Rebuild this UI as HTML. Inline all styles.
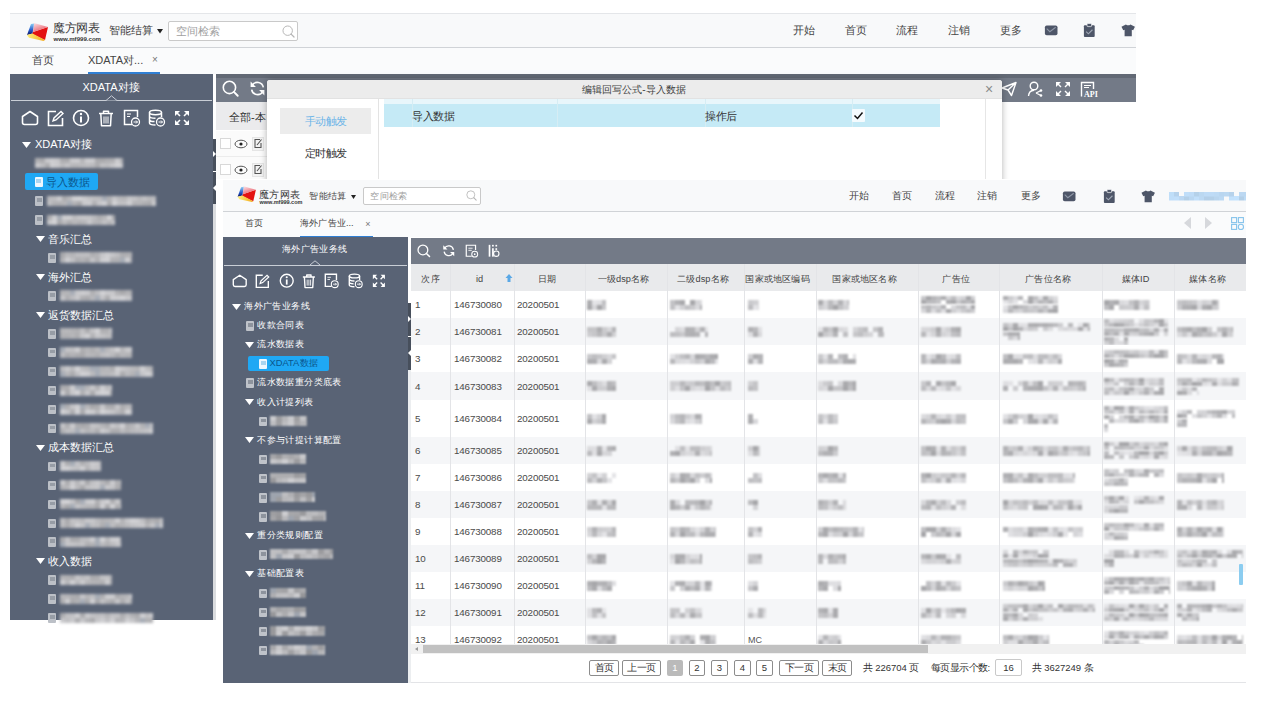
<!DOCTYPE html>
<html><head><meta charset="utf-8"><style>
html,body{margin:0;padding:0;width:1280px;height:720px;overflow:hidden;background:#fff;position:relative}
body{font-family:"Liberation Sans",sans-serif}
.a{position:absolute}
.t{white-space:nowrap}
b{display:inline-block;width:1em;text-align:center;font-weight:inherit}
svg{overflow:visible}
</style></head><body>
<div class="a" style="left:10px;top:13px;width:1126px;height:35px;background:#f8f9fa;border-top:1px solid #e4e6e9;border-bottom:1px solid #d0d3d7;box-sizing:border-box"></div>
<svg class="a" style="left:24.00px;top:18.00px" width="28.00" height="26.00" viewBox="0 0 28 26"><defs><linearGradient id="lb" x1="0" y1="0" x2="0" y2="1"><stop offset="0" stop-color="#8fd0f5"/><stop offset="0.6" stop-color="#2255c8"/><stop offset="1" stop-color="#101560"/></linearGradient><linearGradient id="lp" x1="0" y1="0" x2="0.6" y2="1"><stop offset="0" stop-color="#fbe6ea"/><stop offset="1" stop-color="#ea5a66"/></linearGradient><linearGradient id="ly" x1="0" y1="0" x2="1" y2="0"><stop offset="0" stop-color="#fff07a"/><stop offset="1" stop-color="#f3a81c"/></linearGradient></defs><polygon points="9,14 24,9 21,22 8,16" fill="#e31212"/><polygon points="10,5 24,9 9,14" fill="url(#lp)"/><polygon points="7,6 10,5.5 8.5,15.5 3,17" fill="url(#lb)"/><polygon points="3,17 8.5,15.5 21,22 19.5,23 5,19.8" fill="url(#ly)"/></svg>
<div class="a t" style="left:53px;top:21.0px;height:14px;line-height:14px;font-size:11.7px;color:#3a3a3a"><b>魔</b><b>方</b><b>网</b><b>表</b></div>
<div class="a t" style="left:53.5px;top:34.5px;height:8px;line-height:8px;font-size:6.1px;font-weight:bold;color:#333">www.mf999.com</div>
<div class="a t" style="left:109px;top:22.0px;height:16px;line-height:16px;font-size:11px;color:#454545;"><b>智</b><b>能</b><b>结</b><b>算</b></div>
<svg class="a" style="left:156.50px;top:28.50px" width="6.00" height="4.50" viewBox="0 0 6 4.5"><polygon points="0,0 6,0 3,4.5" fill="#222"/></svg>
<div class="a" style="left:168px;top:21px;width:130px;height:20px;background:#fff;border:1px solid #c9c9c9;box-sizing:border-box;border-radius:2px"></div>
<div class="a t" style="left:176px;top:23.0px;height:16px;line-height:16px;font-size:11px;color:#a0a0a0"><b>空</b><b>间</b><b>检</b><b>索</b></div>
<svg class="a" style="left:281.50px;top:24.50px" width="13.00" height="13.00" viewBox="0 0 16 16"><circle cx="7" cy="7" r="5.8" fill="none" stroke="#b5b5b5" stroke-width="1.2"/><path d="M11.2,11.2 L14.8,14.8" stroke="#b5b5b5" stroke-width="1.5" stroke-linecap="round"/></svg>
<div class="a t" style="left:783.5px;top:22.0px;width:40px;height:16px;line-height:16px;text-align:center;font-size:11px;color:#454545;"><b>开</b><b>始</b></div>
<div class="a t" style="left:835.5px;top:22.0px;width:40px;height:16px;line-height:16px;text-align:center;font-size:11px;color:#454545;"><b>首</b><b>页</b></div>
<div class="a t" style="left:887.0px;top:22.0px;width:40px;height:16px;line-height:16px;text-align:center;font-size:11px;color:#454545;"><b>流</b><b>程</b></div>
<div class="a t" style="left:939.0px;top:22.0px;width:40px;height:16px;line-height:16px;text-align:center;font-size:11px;color:#454545;"><b>注</b><b>销</b></div>
<div class="a t" style="left:991.0px;top:22.0px;width:40px;height:16px;line-height:16px;text-align:center;font-size:11px;color:#454545;"><b>更</b><b>多</b></div>
<svg class="a" style="left:1043.60px;top:25.10px" width="14.40" height="10.80" viewBox="0 0 16 12"><rect x="1" y="0.5" width="14" height="11" rx="2" fill="#4e5668"/><path d="M3,4 L6.5,7.5 L13,2.5" fill="none" stroke="#8e97a6" stroke-width="1.2"/></svg>
<svg class="a" style="left:1083.20px;top:23.30px" width="12.60" height="14.40" viewBox="0 0 14 16"><rect x="1" y="2.5" width="12" height="13" rx="1" fill="#4e5668"/><rect x="4.5" y="0.5" width="5" height="3.5" rx="0.8" fill="#4e5668" stroke="#f5f6f8" stroke-width="0.8"/><path d="M3.5,9.5 L6,12 L10.5,7.5" fill="none" stroke="#a0a8b5" stroke-width="1.3"/></svg>
<svg class="a" style="left:1121.10px;top:24.20px" width="14.40" height="12.60" viewBox="0 0 16 14"><path d="M5.5,0.5 Q8,2.5 10.5,0.5 L15.5,3 L13.5,7 L12,6.3 L12,13.5 L4,13.5 L4,6.3 L2.5,7 L0.5,3 Z" fill="#4e5668"/></svg>
<div class="a" style="left:10px;top:48px;width:1126px;height:26px;background:#fafbfc"></div>
<div class="a t" style="left:22.5px;top:52.0px;width:40px;height:16px;line-height:16px;text-align:center;font-size:11px;color:#454545;"><b>首</b><b>页</b></div>
<div class="a t" style="left:88px;top:52.0px;height:16px;line-height:16px;font-size:11px;color:#454545;">XDATA<b>对</b>...</div>
<div class="a t" style="left:149.0px;top:52.0px;width:12px;height:16px;line-height:16px;text-align:center;font-size:10px;color:#777">×</div>
<div class="a" style="left:88px;top:72px;width:72px;height:2px;background:#2f7fd4"></div>
<div class="a" style="left:10px;top:74px;width:203px;height:546px;background:#596375"></div>
<div class="a t" style="left:51.0px;top:79.0px;width:120px;height:16px;line-height:16px;text-align:center;font-size:11px;color:#fff">XDATA<b>对</b><b>接</b></div>
<div class="a" style="left:11px;top:99.5px;width:201px;height:1px;background:#c9ced6"></div>
<svg class="a" style="left:105.50px;top:95.00px" width="11.00" height="6.00" viewBox="0 0 11 6"><path d="M0,5.5 L5.5,0.8 L11,5.5" fill="#596375" stroke="#c9ced6" stroke-width="1"/></svg>
<svg class="a" style="left:21.20px;top:109.80px" width="18.00" height="16.00" viewBox="0 0 18 16"><path d="M1.5,6.5 L9,1.5 L16.5,6.5 L16.5,12.5 Q16.5,14.5 14.5,14.5 L3.5,14.5 Q1.5,14.5 1.5,12.5 Z" fill="none" stroke="#fff" stroke-width="1.6" stroke-linejoin="round"/></svg>
<svg class="a" style="left:46.60px;top:109.80px" width="18.00" height="17.00" viewBox="0 0 18 17"><path d="M9,1.5 L1.5,1.5 L1.5,15.5 L15.5,15.5 L15.5,8" fill="none" stroke="#fff" stroke-width="1.6"/><path d="M6,11 L7,8 L14,1.5 L16,3.5 L9,10 Z" fill="none" stroke="#fff" stroke-width="1.4"/></svg>
<svg class="a" style="left:72.00px;top:108.80px" width="18.00" height="18.00" viewBox="0 0 18 18"><circle cx="9" cy="9" r="7.5" fill="none" stroke="#fff" stroke-width="1.6"/><rect x="8" y="7.5" width="2" height="6" fill="#fff"/><circle cx="9" cy="5" r="1.2" fill="#fff"/></svg>
<svg class="a" style="left:98.00px;top:109.80px" width="16.00" height="17.00" viewBox="0 0 16 17"><path d="M1,3.5 L15,3.5 M5.5,3.5 L5.5,1.2 L10.5,1.2 L10.5,3.5 M2.8,3.5 L3.5,15.8 L12.5,15.8 L13.2,3.5" fill="none" stroke="#fff" stroke-width="1.5" stroke-linejoin="round"/><path d="M6,6.5 L6,13.5 M8,6.5 L8,13.5 M10,6.5 L10,13.5" stroke="#fff" stroke-width="1"/></svg>
<svg class="a" style="left:122.80px;top:108.80px" width="18.00" height="18.00" viewBox="0 0 18 18"><path d="M9,15.5 L1.5,15.5 L1.5,1.5 L14.5,1.5 L14.5,8" fill="none" stroke="#fff" stroke-width="1.5"/><path d="M4,5 L8,5 M4,7.5 L7,7.5" stroke="#fff" stroke-width="1"/><circle cx="12.5" cy="13" r="4" fill="#596375" stroke="#fff" stroke-width="1.3"/><path d="M10.5,13 L14.5,13 M13,11.5 L14.5,13 L13,14.5" fill="none" stroke="#fff" stroke-width="1"/></svg>
<svg class="a" style="left:147.90px;top:108.80px" width="18.00" height="18.00" viewBox="0 0 18 18"><ellipse cx="7.5" cy="3.5" rx="6" ry="2.2" fill="none" stroke="#fff" stroke-width="1.5"/><path d="M1.5,3.5 L1.5,14 Q1.5,16 7.5,16 M13.5,3.5 L13.5,8 M1.5,7 Q1.5,9.3 7.5,9.3 M1.5,10.5 Q1.5,12.6 6.5,12.6" fill="none" stroke="#fff" stroke-width="1.5"/><circle cx="12.5" cy="13" r="4" fill="#596375" stroke="#fff" stroke-width="1.3"/><path d="M10.5,13 L14.5,13 M13,11.5 L14.5,13 L13,14.5" fill="none" stroke="#fff" stroke-width="1"/></svg>
<svg class="a" style="left:174.40px;top:109.80px" width="16.00" height="16.00" viewBox="0 0 16 16"><path d="M2,2 L6,6 M14,2 L10,6 M2,14 L6,10 M14,14 L10,10" stroke="#fff" stroke-width="1.6"/><path d="M1,1 L6,1 L1,6 Z M15,1 L10,1 L15,6 Z M1,15 L6,15 L1,10 Z M15,15 L10,15 L15,10 Z" fill="#fff"/></svg>
<svg class="a" style="left:22.00px;top:141.50px" width="9.00" height="6.00" viewBox="0 0 9 6"><polygon points="0,0 9,0 4.5,6" fill="#fff"/></svg>
<div class="a t" style="left:35px;top:136.0px;height:16px;line-height:16px;font-size:11px;color:#fff">XDATA<b>对</b><b>接</b></div>
<div class="a" style="left:35px;top:157.7px;width:88px;height:10.5px;background:linear-gradient(90deg,#b1b1b4 0px 5px,#ababae 5px 10px,#cacacd 10px 15px,#cdcdd0 15px 20px,#c8c8cb 20px 25px,#adadb0 25px 30px,#acacaf 30px 35px,#cbcbce 35px 40px,#cccccf 40px 45px,#b6b6b9 45px 50px,#cdcdd0 50px 55px,#cccccf 55px 60px,#ababae 60px 65px,#aaaaad 65px 70px,#b0b0b3 70px 75px,#b1b1b4 75px 80px,#cccccf 80px 85px,#b3b3b6 85px 88px) top/100% 50% no-repeat,linear-gradient(90deg,#cccccf 0px 5px,#bfbfc2 5px 10px,#acacaf 10px 15px,#cfcfd2 15px 20px,#cacacd 20px 25px,#bcbcbf 25px 30px,#c5c5c8 30px 35px,#b7b7ba 35px 40px,#b7b7ba 40px 45px,#bbbbbe 45px 50px,#bdbdc0 50px 55px,#bababd 55px 60px,#acacaf 60px 65px,#c2c2c5 65px 70px,#bdbdc0 70px 75px,#c7c7ca 75px 80px,#d2d2d5 80px 85px,#cbcbce 85px 88px) bottom/100% 50% no-repeat;background-color:#a6acb6;filter:blur(1.5px);opacity:1"></div>
<div class="a" style="left:25px;top:173.4px;width:73px;height:17px;background:#1fa8f4;border-radius:2px"></div>
<div class="a" style="left:34.5px;top:177.4px;width:8px;height:9.5px;background:#eef8ff;border-radius:1px"></div>
<div class="a" style="left:36.0px;top:179.4px;width:5px;height:3.5px;background:#a9d5f0"></div>
<div class="a t" style="left:46px;top:173.9px;height:16px;line-height:16px;font-size:11px;color:#0b568c"><b>导</b><b>入</b><b>数</b><b>据</b></div>
<div class="a" style="left:35px;top:196.35px;width:8px;height:9.5px;background:#bcc0c7;border-radius:1px;filter:blur(0.6px)"></div>
<div class="a" style="left:36.5px;top:198.35px;width:5px;height:3.5px;background:#979da6;filter:blur(0.6px)"></div>
<div class="a" style="left:47px;top:195.6px;width:109px;height:10.5px;background:linear-gradient(90deg,#bcbcbf 0px 5px,#bebec1 5px 10px,#cdcdd0 10px 15px,#acacaf 15px 20px,#b9b9bc 20px 25px,#d2d2d5 25px 30px,#d4d4d7 30px 35px,#cccccf 35px 40px,#c4c4c7 40px 45px,#c0c0c3 45px 50px,#bebec1 50px 55px,transparent 55px 60px,#b2b2b5 60px 65px,#c7c7ca 65px 70px,#bababd 70px 75px,#b7b7ba 75px 80px,#c7c7ca 80px 85px,#c4c4c7 85px 90px,#b9b9bc 90px 95px,#c3c3c6 95px 100px,#b9b9bc 100px 105px,#bebec1 105px 109px) top/100% 50% no-repeat,linear-gradient(90deg,#c0c0c3 0px 5px,#b1b1b4 5px 10px,#b1b1b4 10px 15px,#b6b6b9 15px 20px,transparent 20px 25px,#b3b3b6 25px 30px,#a8a8ab 30px 35px,#cacacd 35px 40px,#cccccf 40px 45px,#b0b0b3 45px 50px,#c8c8cb 50px 55px,#d1d1d4 55px 60px,#ababae 60px 65px,#d3d3d6 65px 70px,#c1c1c4 70px 75px,#c1c1c4 75px 80px,#d0d0d3 80px 85px,#b4b4b7 85px 90px,#b5b5b8 90px 95px,#afafb2 95px 100px,#ababae 100px 105px,#cccccf 105px 109px) bottom/100% 50% no-repeat;background-color:#a6acb6;filter:blur(1.5px);opacity:1"></div>
<div class="a" style="left:35px;top:215.3px;width:8px;height:9.5px;background:#bcc0c7;border-radius:1px;filter:blur(0.6px)"></div>
<div class="a" style="left:36.5px;top:217.3px;width:5px;height:3.5px;background:#979da6;filter:blur(0.6px)"></div>
<div class="a" style="left:47px;top:214.55px;width:68px;height:10.5px;background:linear-gradient(90deg,#aeaeb1 0px 5px,#cfcfd2 5px 10px,transparent 10px 15px,#cfcfd2 15px 20px,#d0d0d3 20px 25px,#bebec1 25px 30px,#c6c6c9 30px 35px,#c7c7ca 35px 40px,#c5c5c8 40px 45px,#bbbbbe 45px 50px,#aeaeb1 50px 55px,#b8b8bb 55px 60px,#d4d4d7 60px 65px,#a9a9ac 65px 68px) top/100% 50% no-repeat,linear-gradient(90deg,#c9c9cc 0px 5px,#d4d4d7 5px 10px,#a9a9ac 10px 15px,#bbbbbe 15px 20px,#adadb0 20px 25px,#b8b8bb 25px 30px,#b2b2b5 30px 35px,#b6b6b9 35px 40px,#c8c8cb 40px 45px,#b6b6b9 45px 50px,#b4b4b7 50px 55px,#c1c1c4 55px 60px,#b6b6b9 60px 65px,#c7c7ca 65px 68px) bottom/100% 50% no-repeat;background-color:#a6acb6;filter:blur(1.5px);opacity:1"></div>
<svg class="a" style="left:36.00px;top:236.25px" width="9.00" height="6.00" viewBox="0 0 9 6"><polygon points="0,0 9,0 4.5,6" fill="#fff"/></svg>
<div class="a t" style="left:47.5px;top:230.8px;height:16px;line-height:16px;font-size:11px;color:#fff"><b>音</b><b>乐</b><b>汇</b><b>总</b></div>
<div class="a" style="left:48px;top:253.2px;width:8px;height:9.5px;background:#bcc0c7;border-radius:1px;filter:blur(0.6px)"></div>
<div class="a" style="left:49.5px;top:255.2px;width:5px;height:3.5px;background:#979da6;filter:blur(0.6px)"></div>
<div class="a" style="left:60px;top:252.45px;width:72px;height:10.5px;background:linear-gradient(90deg,#a9a9ac 0px 5px,#b9b9bc 5px 10px,#b4b4b7 10px 15px,#bebec1 15px 20px,#bebec1 20px 25px,#bfbfc2 25px 30px,#aeaeb1 30px 35px,#b4b4b7 35px 40px,#c6c6c9 40px 45px,#cfcfd2 45px 50px,#c6c6c9 50px 55px,#bebec1 55px 60px,#adadb0 60px 65px,#afafb2 65px 70px,#b4b4b7 70px 72px) top/100% 50% no-repeat,linear-gradient(90deg,#b3b3b6 0px 5px,#d0d0d3 5px 10px,#c1c1c4 10px 15px,#adadb0 15px 20px,#b2b2b5 20px 25px,#a9a9ac 25px 30px,#c5c5c8 30px 35px,#b1b1b4 35px 40px,#ceced1 40px 45px,#d2d2d5 45px 50px,#b1b1b4 50px 55px,#b0b0b3 55px 60px,transparent 60px 65px,#d1d1d4 65px 70px,#b0b0b3 70px 72px) bottom/100% 50% no-repeat;background-color:#a6acb6;filter:blur(1.5px);opacity:1"></div>
<svg class="a" style="left:36.00px;top:274.15px" width="9.00" height="6.00" viewBox="0 0 9 6"><polygon points="0,0 9,0 4.5,6" fill="#fff"/></svg>
<div class="a t" style="left:47.5px;top:268.6px;height:16px;line-height:16px;font-size:11px;color:#fff"><b>海</b><b>外</b><b>汇</b><b>总</b></div>
<div class="a" style="left:48px;top:291.1px;width:8px;height:9.5px;background:#bcc0c7;border-radius:1px;filter:blur(0.6px)"></div>
<div class="a" style="left:49.5px;top:293.1px;width:5px;height:3.5px;background:#979da6;filter:blur(0.6px)"></div>
<div class="a" style="left:60px;top:290.35px;width:72px;height:10.5px;background:linear-gradient(90deg,#b4b4b7 0px 5px,#b5b5b8 5px 10px,transparent 10px 15px,#c8c8cb 15px 20px,#cdcdd0 20px 25px,#cacacd 25px 30px,#b0b0b3 30px 35px,#bebec1 35px 40px,#d2d2d5 40px 45px,#c9c9cc 45px 50px,#c8c8cb 50px 55px,#b1b1b4 55px 60px,#a9a9ac 60px 65px,#b3b3b6 65px 70px,#b1b1b4 70px 72px) top/100% 50% no-repeat,linear-gradient(90deg,#c6c6c9 0px 5px,#afafb2 5px 10px,#bcbcbf 10px 15px,#c9c9cc 15px 20px,#aeaeb1 20px 25px,#ababae 25px 30px,#b9b9bc 30px 35px,transparent 35px 40px,#c4c4c7 40px 45px,#acacaf 45px 50px,#cfcfd2 50px 55px,#ceced1 55px 60px,#d4d4d7 60px 65px,#c8c8cb 65px 70px,#c6c6c9 70px 72px) bottom/100% 50% no-repeat;background-color:#a6acb6;filter:blur(1.5px);opacity:1"></div>
<svg class="a" style="left:36.00px;top:312.05px" width="9.00" height="6.00" viewBox="0 0 9 6"><polygon points="0,0 9,0 4.5,6" fill="#fff"/></svg>
<div class="a t" style="left:47.5px;top:306.5px;height:16px;line-height:16px;font-size:11px;color:#fff"><b>返</b><b>货</b><b>数</b><b>据</b><b>汇</b><b>总</b></div>
<div class="a" style="left:48px;top:329.0px;width:8px;height:9.5px;background:#bcc0c7;border-radius:1px;filter:blur(0.6px)"></div>
<div class="a" style="left:49.5px;top:331.0px;width:5px;height:3.5px;background:#979da6;filter:blur(0.6px)"></div>
<div class="a" style="left:60px;top:328.25px;width:52px;height:10.5px;background:linear-gradient(90deg,#b7b7ba 0px 5px,#b8b8bb 5px 10px,#b4b4b7 10px 15px,#b0b0b3 15px 20px,#c1c1c4 20px 25px,#acacaf 25px 30px,#c3c3c6 30px 35px,#d2d2d5 35px 40px,#afafb2 40px 45px,#b1b1b4 45px 50px,#d1d1d4 50px 52px) top/100% 50% no-repeat,linear-gradient(90deg,#b1b1b4 0px 5px,#b0b0b3 5px 10px,#b6b6b9 10px 15px,#aeaeb1 15px 20px,#c7c7ca 20px 25px,#d2d2d5 25px 30px,#b2b2b5 30px 35px,#c8c8cb 35px 40px,#c2c2c5 40px 45px,#bcbcbf 45px 50px,#bfbfc2 50px 52px) bottom/100% 50% no-repeat;background-color:#a6acb6;filter:blur(1.5px);opacity:1"></div>
<div class="a" style="left:48px;top:347.95px;width:8px;height:9.5px;background:#bcc0c7;border-radius:1px;filter:blur(0.6px)"></div>
<div class="a" style="left:49.5px;top:349.95px;width:5px;height:3.5px;background:#979da6;filter:blur(0.6px)"></div>
<div class="a" style="left:60px;top:347.2px;width:72px;height:10.5px;background:linear-gradient(90deg,transparent 0px 5px,#c4c4c7 5px 10px,#c0c0c3 10px 15px,#cfcfd2 15px 20px,#acacaf 20px 25px,#b6b6b9 25px 30px,#aeaeb1 30px 35px,#b9b9bc 35px 40px,transparent 40px 45px,#b9b9bc 45px 50px,#c3c3c6 50px 55px,#d3d3d6 55px 60px,#b8b8bb 60px 65px,#cacacd 65px 70px,#cccccf 70px 72px) top/100% 50% no-repeat,linear-gradient(90deg,#bcbcbf 0px 5px,#ababae 5px 10px,#b3b3b6 10px 15px,#acacaf 15px 20px,#a9a9ac 20px 25px,#b8b8bb 25px 30px,#b6b6b9 30px 35px,#afafb2 35px 40px,#bdbdc0 40px 45px,#c2c2c5 45px 50px,#b9b9bc 50px 55px,#aaaaad 55px 60px,#b7b7ba 60px 65px,#b2b2b5 65px 70px,#b3b3b6 70px 72px) bottom/100% 50% no-repeat;background-color:#a6acb6;filter:blur(1.5px);opacity:1"></div>
<div class="a" style="left:48px;top:366.9px;width:8px;height:9.5px;background:#bcc0c7;border-radius:1px;filter:blur(0.6px)"></div>
<div class="a" style="left:49.5px;top:368.9px;width:5px;height:3.5px;background:#979da6;filter:blur(0.6px)"></div>
<div class="a" style="left:60px;top:366.15px;width:93px;height:10.5px;background:linear-gradient(90deg,#bbbbbe 0px 5px,#c9c9cc 5px 10px,#bababd 10px 15px,#d3d3d6 15px 20px,#bebec1 20px 25px,#b8b8bb 25px 30px,transparent 30px 35px,transparent 35px 40px,#b4b4b7 40px 45px,#b7b7ba 45px 50px,#aeaeb1 50px 55px,#d1d1d4 55px 60px,#c7c7ca 60px 65px,#c1c1c4 65px 70px,#bbbbbe 70px 75px,#b6b6b9 75px 80px,#d0d0d3 80px 85px,#bebec1 85px 90px,#b0b0b3 90px 93px) top/100% 50% no-repeat,linear-gradient(90deg,transparent 0px 5px,#b8b8bb 5px 10px,#ababae 10px 15px,#c0c0c3 15px 20px,#d2d2d5 20px 25px,#ceced1 25px 30px,#bababd 30px 35px,transparent 35px 40px,#b9b9bc 40px 45px,#b8b8bb 45px 50px,#bdbdc0 50px 55px,#cbcbce 55px 60px,#aaaaad 60px 65px,#bbbbbe 65px 70px,#b3b3b6 70px 75px,transparent 75px 80px,#c6c6c9 80px 85px,#d1d1d4 85px 90px,#c8c8cb 90px 93px) bottom/100% 50% no-repeat;background-color:#a6acb6;filter:blur(1.5px);opacity:1"></div>
<div class="a" style="left:48px;top:385.85px;width:8px;height:9.5px;background:#bcc0c7;border-radius:1px;filter:blur(0.6px)"></div>
<div class="a" style="left:49.5px;top:387.85px;width:5px;height:3.5px;background:#979da6;filter:blur(0.6px)"></div>
<div class="a" style="left:60px;top:385.1px;width:52px;height:10.5px;background:linear-gradient(90deg,#adadb0 0px 5px,#adadb0 5px 10px,#cdcdd0 10px 15px,transparent 15px 20px,transparent 20px 25px,#b6b6b9 25px 30px,#c9c9cc 30px 35px,#b1b1b4 35px 40px,#ceced1 40px 45px,#bcbcbf 45px 50px,#c7c7ca 50px 52px) top/100% 50% no-repeat,linear-gradient(90deg,#cfcfd2 0px 5px,#aaaaad 5px 10px,#c8c8cb 10px 15px,#d4d4d7 15px 20px,#b0b0b3 20px 25px,#c8c8cb 25px 30px,#a9a9ac 30px 35px,#cdcdd0 35px 40px,#d3d3d6 40px 45px,#d1d1d4 45px 50px,#a9a9ac 50px 52px) bottom/100% 50% no-repeat;background-color:#a6acb6;filter:blur(1.5px);opacity:1"></div>
<div class="a" style="left:48px;top:404.8px;width:8px;height:9.5px;background:#bcc0c7;border-radius:1px;filter:blur(0.6px)"></div>
<div class="a" style="left:49.5px;top:406.8px;width:5px;height:3.5px;background:#979da6;filter:blur(0.6px)"></div>
<div class="a" style="left:60px;top:404.05px;width:72px;height:10.5px;background:linear-gradient(90deg,transparent 0px 5px,#aeaeb1 5px 10px,#c4c4c7 10px 15px,#d0d0d3 15px 20px,transparent 20px 25px,#b7b7ba 25px 30px,#a8a8ab 30px 35px,#acacaf 35px 40px,#c8c8cb 40px 45px,#adadb0 45px 50px,#acacaf 50px 55px,#c6c6c9 55px 60px,#acacaf 60px 65px,#b7b7ba 65px 70px,#b5b5b8 70px 72px) top/100% 50% no-repeat,linear-gradient(90deg,#d1d1d4 0px 5px,#c7c7ca 5px 10px,#acacaf 10px 15px,#d3d3d6 15px 20px,#aaaaad 20px 25px,#d1d1d4 25px 30px,#ceced1 30px 35px,#b8b8bb 35px 40px,#d4d4d7 40px 45px,#cccccf 45px 50px,#c6c6c9 50px 55px,#b9b9bc 55px 60px,#aeaeb1 60px 65px,#d3d3d6 65px 70px,#c9c9cc 70px 72px) bottom/100% 50% no-repeat;background-color:#a6acb6;filter:blur(1.5px);opacity:1"></div>
<div class="a" style="left:48px;top:423.75px;width:8px;height:9.5px;background:#bcc0c7;border-radius:1px;filter:blur(0.6px)"></div>
<div class="a" style="left:49.5px;top:425.75px;width:5px;height:3.5px;background:#979da6;filter:blur(0.6px)"></div>
<div class="a" style="left:60px;top:423.0px;width:93px;height:10.5px;background:linear-gradient(90deg,#c5c5c8 0px 5px,#afafb2 5px 10px,#cbcbce 10px 15px,#adadb0 15px 20px,#a9a9ac 20px 25px,#acacaf 25px 30px,#c4c4c7 30px 35px,#c0c0c3 35px 40px,#b5b5b8 40px 45px,#adadb0 45px 50px,#c9c9cc 50px 55px,#bfbfc2 55px 60px,#d0d0d3 60px 65px,#afafb2 65px 70px,#b6b6b9 70px 75px,#c7c7ca 75px 80px,#b2b2b5 80px 85px,transparent 85px 90px,#c4c4c7 90px 93px) top/100% 50% no-repeat,linear-gradient(90deg,#b1b1b4 0px 5px,#c0c0c3 5px 10px,#bdbdc0 10px 15px,transparent 15px 20px,#c1c1c4 20px 25px,#b4b4b7 25px 30px,#bababd 30px 35px,#acacaf 35px 40px,#cdcdd0 40px 45px,#c3c3c6 45px 50px,#ababae 50px 55px,#ababae 55px 60px,#bababd 60px 65px,#b1b1b4 65px 70px,#b9b9bc 70px 75px,#bcbcbf 75px 80px,#bfbfc2 80px 85px,#c3c3c6 85px 90px,#d0d0d3 90px 93px) bottom/100% 50% no-repeat;background-color:#a6acb6;filter:blur(1.5px);opacity:1"></div>
<svg class="a" style="left:36.00px;top:444.70px" width="9.00" height="6.00" viewBox="0 0 9 6"><polygon points="0,0 9,0 4.5,6" fill="#fff"/></svg>
<div class="a t" style="left:47.5px;top:439.2px;height:16px;line-height:16px;font-size:11px;color:#fff"><b>成</b><b>本</b><b>数</b><b>据</b><b>汇</b><b>总</b></div>
<div class="a" style="left:48px;top:461.65px;width:8px;height:9.5px;background:#bcc0c7;border-radius:1px;filter:blur(0.6px)"></div>
<div class="a" style="left:49.5px;top:463.65px;width:5px;height:3.5px;background:#979da6;filter:blur(0.6px)"></div>
<div class="a" style="left:60px;top:460.9px;width:41px;height:10.5px;background:linear-gradient(90deg,#cbcbce 0px 5px,#adadb0 5px 10px,transparent 10px 15px,#c4c4c7 15px 20px,#b0b0b3 20px 25px,#bababd 25px 30px,#cbcbce 30px 35px,#c6c6c9 35px 40px,#bababd 40px 41px) top/100% 50% no-repeat,linear-gradient(90deg,#d1d1d4 0px 5px,#d1d1d4 5px 10px,#c6c6c9 10px 15px,#c1c1c4 15px 20px,#d1d1d4 20px 25px,#b5b5b8 25px 30px,#c7c7ca 30px 35px,#c4c4c7 35px 40px,#c4c4c7 40px 41px) bottom/100% 50% no-repeat;background-color:#a6acb6;filter:blur(1.5px);opacity:1"></div>
<div class="a" style="left:48px;top:480.59999999999997px;width:8px;height:9.5px;background:#bcc0c7;border-radius:1px;filter:blur(0.6px)"></div>
<div class="a" style="left:49.5px;top:482.59999999999997px;width:5px;height:3.5px;background:#979da6;filter:blur(0.6px)"></div>
<div class="a" style="left:60px;top:479.84999999999997px;width:61px;height:10.5px;background:linear-gradient(90deg,#cbcbce 0px 5px,#adadb0 5px 10px,#cbcbce 10px 15px,#b7b7ba 15px 20px,#cccccf 20px 25px,#a9a9ac 25px 30px,#c2c2c5 30px 35px,#c9c9cc 35px 40px,#b9b9bc 40px 45px,#ababae 45px 50px,#cccccf 50px 55px,#b0b0b3 55px 60px,#c9c9cc 60px 61px) top/100% 50% no-repeat,linear-gradient(90deg,#b5b5b8 0px 5px,#b7b7ba 5px 10px,#d1d1d4 10px 15px,#bbbbbe 15px 20px,#a9a9ac 20px 25px,#c3c3c6 25px 30px,#c6c6c9 30px 35px,#c7c7ca 35px 40px,transparent 40px 45px,#c9c9cc 45px 50px,#c4c4c7 50px 55px,#aeaeb1 55px 60px,#b1b1b4 60px 61px) bottom/100% 50% no-repeat;background-color:#a6acb6;filter:blur(1.5px);opacity:1"></div>
<div class="a" style="left:48px;top:499.55px;width:8px;height:9.5px;background:#bcc0c7;border-radius:1px;filter:blur(0.6px)"></div>
<div class="a" style="left:49.5px;top:501.55px;width:5px;height:3.5px;background:#979da6;filter:blur(0.6px)"></div>
<div class="a" style="left:60px;top:498.8px;width:61px;height:10.5px;background:linear-gradient(90deg,#d3d3d6 0px 5px,#d4d4d7 5px 10px,#c5c5c8 10px 15px,#aaaaad 15px 20px,transparent 20px 25px,#cccccf 25px 30px,#d1d1d4 30px 35px,#b0b0b3 35px 40px,#c9c9cc 40px 45px,#d4d4d7 45px 50px,#aeaeb1 50px 55px,#c9c9cc 55px 60px,#b4b4b7 60px 61px) top/100% 50% no-repeat,linear-gradient(90deg,#b6b6b9 0px 5px,#a8a8ab 5px 10px,transparent 10px 15px,#c5c5c8 15px 20px,#bcbcbf 20px 25px,#b7b7ba 25px 30px,#b7b7ba 30px 35px,#a9a9ac 35px 40px,#d1d1d4 40px 45px,#a9a9ac 45px 50px,#d3d3d6 50px 55px,#adadb0 55px 60px,#d2d2d5 60px 61px) bottom/100% 50% no-repeat;background-color:#a6acb6;filter:blur(1.5px);opacity:1"></div>
<div class="a" style="left:48px;top:518.5px;width:8px;height:9.5px;background:#bcc0c7;border-radius:1px;filter:blur(0.6px)"></div>
<div class="a" style="left:49.5px;top:520.5px;width:5px;height:3.5px;background:#979da6;filter:blur(0.6px)"></div>
<div class="a" style="left:60px;top:517.75px;width:103px;height:10.5px;background:linear-gradient(90deg,#bfbfc2 0px 5px,#aaaaad 5px 10px,#c2c2c5 10px 15px,#c1c1c4 15px 20px,#bababd 20px 25px,#c8c8cb 25px 30px,#c7c7ca 30px 35px,#bbbbbe 35px 40px,#b4b4b7 40px 45px,#b6b6b9 45px 50px,#bababd 50px 55px,#cfcfd2 55px 60px,#b3b3b6 60px 65px,#c7c7ca 65px 70px,#d2d2d5 70px 75px,#ceced1 75px 80px,#c1c1c4 80px 85px,#a9a9ac 85px 90px,#b1b1b4 90px 95px,#ababae 95px 100px,#c4c4c7 100px 103px) top/100% 50% no-repeat,linear-gradient(90deg,#bcbcbf 0px 5px,#adadb0 5px 10px,#bdbdc0 10px 15px,#d1d1d4 15px 20px,#c5c5c8 20px 25px,transparent 25px 30px,#c0c0c3 30px 35px,#bdbdc0 35px 40px,#aeaeb1 40px 45px,transparent 45px 50px,#bebec1 50px 55px,#afafb2 55px 60px,#b5b5b8 60px 65px,#bbbbbe 65px 70px,#c3c3c6 70px 75px,#c6c6c9 75px 80px,#cacacd 80px 85px,#b4b4b7 85px 90px,#c6c6c9 90px 95px,transparent 95px 100px,#d0d0d3 100px 103px) bottom/100% 50% no-repeat;background-color:#a6acb6;filter:blur(1.5px);opacity:1"></div>
<div class="a" style="left:48px;top:537.45px;width:8px;height:9.5px;background:#bcc0c7;border-radius:1px;filter:blur(0.6px)"></div>
<div class="a" style="left:49.5px;top:539.45px;width:5px;height:3.5px;background:#979da6;filter:blur(0.6px)"></div>
<div class="a" style="left:60px;top:536.7px;width:61px;height:10.5px;background:linear-gradient(90deg,#aaaaad 0px 5px,#c5c5c8 5px 10px,#ababae 10px 15px,#acacaf 15px 20px,#bdbdc0 20px 25px,#bdbdc0 25px 30px,#cfcfd2 30px 35px,transparent 35px 40px,#d4d4d7 40px 45px,#b9b9bc 45px 50px,#ceced1 50px 55px,#d0d0d3 55px 60px,#acacaf 60px 61px) top/100% 50% no-repeat,linear-gradient(90deg,transparent 0px 5px,#c6c6c9 5px 10px,#c5c5c8 10px 15px,#c0c0c3 15px 20px,#c3c3c6 20px 25px,#b0b0b3 25px 30px,#b3b3b6 30px 35px,transparent 35px 40px,#bbbbbe 40px 45px,#b1b1b4 45px 50px,#bcbcbf 50px 55px,#c5c5c8 55px 60px,#ceced1 60px 61px) bottom/100% 50% no-repeat;background-color:#a6acb6;filter:blur(1.5px);opacity:1"></div>
<svg class="a" style="left:36.00px;top:558.40px" width="9.00" height="6.00" viewBox="0 0 9 6"><polygon points="0,0 9,0 4.5,6" fill="#fff"/></svg>
<div class="a t" style="left:47.5px;top:552.9px;height:16px;line-height:16px;font-size:11px;color:#fff"><b>收</b><b>入</b><b>数</b><b>据</b></div>
<div class="a" style="left:48px;top:575.3499999999999px;width:8px;height:9.5px;background:#bcc0c7;border-radius:1px;filter:blur(0.6px)"></div>
<div class="a" style="left:49.5px;top:577.3499999999999px;width:5px;height:3.5px;background:#979da6;filter:blur(0.6px)"></div>
<div class="a" style="left:60px;top:574.5999999999999px;width:52px;height:10.5px;background:linear-gradient(90deg,#b4b4b7 0px 5px,#b2b2b5 5px 10px,#acacaf 10px 15px,#c6c6c9 15px 20px,#bcbcbf 20px 25px,#c3c3c6 25px 30px,#acacaf 30px 35px,#adadb0 35px 40px,#c2c2c5 40px 45px,#c4c4c7 45px 50px,#b0b0b3 50px 52px) top/100% 50% no-repeat,linear-gradient(90deg,#cfcfd2 0px 5px,#b7b7ba 5px 10px,#d2d2d5 10px 15px,#bababd 15px 20px,#cccccf 20px 25px,#b8b8bb 25px 30px,#b4b4b7 30px 35px,#b3b3b6 35px 40px,#b1b1b4 40px 45px,#cdcdd0 45px 50px,#acacaf 50px 52px) bottom/100% 50% no-repeat;background-color:#a6acb6;filter:blur(1.5px);opacity:1"></div>
<div class="a" style="left:48px;top:594.3px;width:8px;height:9.5px;background:#bcc0c7;border-radius:1px;filter:blur(0.6px)"></div>
<div class="a" style="left:49.5px;top:596.3px;width:5px;height:3.5px;background:#979da6;filter:blur(0.6px)"></div>
<div class="a" style="left:60px;top:593.55px;width:72px;height:10.5px;background:linear-gradient(90deg,#b7b7ba 0px 5px,#b6b6b9 5px 10px,#aeaeb1 10px 15px,#aaaaad 15px 20px,#c6c6c9 20px 25px,#b6b6b9 25px 30px,#bfbfc2 30px 35px,transparent 35px 40px,#afafb2 40px 45px,#ceced1 45px 50px,#cdcdd0 50px 55px,#acacaf 55px 60px,#b3b3b6 60px 65px,#b8b8bb 65px 70px,#d2d2d5 70px 72px) top/100% 50% no-repeat,linear-gradient(90deg,#aeaeb1 0px 5px,#cfcfd2 5px 10px,#aaaaad 10px 15px,#b1b1b4 15px 20px,transparent 20px 25px,#aaaaad 25px 30px,#d1d1d4 30px 35px,#a8a8ab 35px 40px,#c2c2c5 40px 45px,#b3b3b6 45px 50px,#acacaf 50px 55px,#c7c7ca 55px 60px,#acacaf 60px 65px,#c1c1c4 65px 70px,#b1b1b4 70px 72px) bottom/100% 50% no-repeat;background-color:#a6acb6;filter:blur(1.5px);opacity:1"></div>
<div class="a" style="left:48px;top:613.25px;width:8px;height:9.5px;background:#bcc0c7;border-radius:1px;filter:blur(0.6px)"></div>
<div class="a" style="left:49.5px;top:615.25px;width:5px;height:3.5px;background:#979da6;filter:blur(0.6px)"></div>
<div class="a" style="left:60px;top:612.5px;width:93px;height:10.5px;background:linear-gradient(90deg,#adadb0 0px 5px,#c1c1c4 5px 10px,#c2c2c5 10px 15px,#d2d2d5 15px 20px,#ababae 20px 25px,#cccccf 25px 30px,#c2c2c5 30px 35px,#bfbfc2 35px 40px,#c1c1c4 40px 45px,#b5b5b8 45px 50px,#c3c3c6 50px 55px,#c3c3c6 55px 60px,#adadb0 60px 65px,#bfbfc2 65px 70px,#b2b2b5 70px 75px,#ababae 75px 80px,#d1d1d4 80px 85px,#c1c1c4 85px 90px,#cfcfd2 90px 93px) top/100% 50% no-repeat,linear-gradient(90deg,#c8c8cb 0px 5px,#bebec1 5px 10px,#c9c9cc 10px 15px,#acacaf 15px 20px,#c7c7ca 20px 25px,#b4b4b7 25px 30px,#aaaaad 30px 35px,#c6c6c9 35px 40px,#ceced1 40px 45px,#c0c0c3 45px 50px,#cfcfd2 50px 55px,#b2b2b5 55px 60px,#b6b6b9 60px 65px,#cfcfd2 65px 70px,#c6c6c9 70px 75px,#b5b5b8 75px 80px,transparent 80px 85px,#b2b2b5 85px 90px,#afafb2 90px 93px) bottom/100% 50% no-repeat;background-color:#a6acb6;filter:blur(1.5px);opacity:1"></div>
<div class="a" style="left:213px;top:139px;width:3px;height:65px;background:#474f5c"></div>
<svg class="a" style="left:213.00px;top:151.00px" width="3.00" height="6.00" viewBox="0 0 3 6"><polygon points="0,0 3,3 0,6" fill="#fff"/></svg>
<div class="a" style="left:213px;top:171px;width:3px;height:1px;background:#fff"></div>
<svg class="a" style="left:213.00px;top:184.50px" width="3.00" height="6.00" viewBox="0 0 3 6"><polygon points="3,0 0,3 3,6" fill="#fff"/></svg>
<div class="a" style="left:213px;top:204px;width:2.5px;height:416px;background:#dadcdf"></div>
<div class="a" style="left:216px;top:74px;width:920px;height:28px;background:#737a87"></div>
<div class="a" style="left:216px;top:74px;width:920px;height:4px;background:#626975"></div>
<svg class="a" style="left:221.50px;top:79.50px" width="17.00" height="17.00" viewBox="0 0 16 16"><circle cx="7" cy="7" r="5.8" fill="none" stroke="#fff" stroke-width="1.5"/><path d="M11.2,11.2 L14.8,14.8" stroke="#fff" stroke-width="1.8" stroke-linecap="round"/></svg>
<svg class="a" style="left:248.50px;top:79.50px" width="17.00" height="17.00" viewBox="0 0 16 16"><g transform="translate(16,0) scale(-1,1)"><path d="M2.5,7 A5.7,5.7 0 0 1 13,5" fill="none" stroke="#fff" stroke-width="1.5"/><path d="M13.5,9 A5.7,5.7 0 0 1 3,11" fill="none" stroke="#fff" stroke-width="1.5"/><path d="M14.5,1.5 L14.5,6.5 L9.5,6.5 Z M1.5,14.5 L1.5,9.5 L6.5,9.5 Z" fill="#fff"/></g></svg>
<svg class="a" style="left:1001.00px;top:81.00px" width="16.00" height="16.00" viewBox="0 0 16 16"><path d="M1,7 L15,1.5 L10.5,14.5 L7,9 Z M7,9 L15,1.5" fill="none" stroke="#fff" stroke-width="1.4" stroke-linejoin="round"/></svg>
<svg class="a" style="left:1027.00px;top:81.00px" width="16.00" height="16.00" viewBox="0 0 16 16"><circle cx="7" cy="5" r="3.8" fill="none" stroke="#fff" stroke-width="1.4"/><path d="M1.5,15 Q2,9.5 7,9.3" fill="none" stroke="#fff" stroke-width="1.4"/><path d="M9,12 L14,9.5 M9,12 L14,14.5" stroke="#fff" stroke-width="1.3"/><circle cx="14" cy="9.5" r="1.3" fill="#fff"/><circle cx="14" cy="14.5" r="1.3" fill="#fff"/></svg>
<svg class="a" style="left:1054.50px;top:81.00px" width="16.00" height="16.00" viewBox="0 0 16 16"><path d="M2,2 L6,6 M14,2 L10,6 M2,14 L6,10 M14,14 L10,10" stroke="#fff" stroke-width="1.4"/><path d="M1,1 L6,1 L1,6 Z M15,1 L10,1 L15,6 Z M1,15 L6,15 L1,10 Z M15,15 L10,15 L15,10 Z" fill="#fff"/></svg>
<svg class="a" style="left:1080.00px;top:81.00px" width="18.00" height="17.00" viewBox="0 0 18 17"><path d="M1.5,15.5 L1.5,1.5 L13.5,1.5 L13.5,8" fill="none" stroke="#fff" stroke-width="1.4"/><path d="M4,4.5 L11,4.5 M4,6.5 L9,6.5" stroke="#fff" stroke-width="1"/><text x="4" y="15.5" font-family="Liberation Serif" font-size="8" font-weight="bold" fill="#fff">API</text></svg>
<div class="a" style="left:216px;top:102px;width:51px;height:28px;background:#ebebed"></div>
<div class="a t" style="left:229px;top:109.0px;height:16px;line-height:16px;font-size:11px;color:#333"><b>全</b><b>部</b>-<b>本</b></div>
<div class="a" style="left:216px;top:131px;width:51px;height:26px;background:#fbfbfb;border-bottom:1px solid #ececec;box-sizing:border-box"></div>
<div class="a" style="left:220px;top:138px;width:11px;height:11px;background:#fff;border:1px solid #d8d8d8;box-sizing:border-box"></div>
<svg class="a" style="left:234.00px;top:139.00px" width="14.00" height="10.00" viewBox="0 0 14 10"><ellipse cx="7" cy="5" rx="6" ry="3.8" fill="none" stroke="#555" stroke-width="1"/><circle cx="7" cy="5" r="1.6" fill="#222"/></svg>
<div class="a" style="left:252px;top:137px;width:12px;height:14px;background:#f3f3f3;border:1px solid #e5e5e5;box-sizing:border-box"></div>
<svg class="a" style="left:253.00px;top:138.00px" width="10.00" height="11.00" viewBox="0 0 10 11"><path d="M7,1.5 L2,1.5 L2,9.5 L8,9.5 L8,5 M4,7 L8.5,1.5" fill="none" stroke="#555" stroke-width="1.1"/></svg>
<div class="a" style="left:216px;top:157px;width:51px;height:26px;background:#fbfbfb;border-bottom:1px solid #ececec;box-sizing:border-box"></div>
<div class="a" style="left:220px;top:164px;width:11px;height:11px;background:#fff;border:1px solid #d8d8d8;box-sizing:border-box"></div>
<svg class="a" style="left:234.00px;top:165.00px" width="14.00" height="10.00" viewBox="0 0 14 10"><ellipse cx="7" cy="5" rx="6" ry="3.8" fill="none" stroke="#555" stroke-width="1"/><circle cx="7" cy="5" r="1.6" fill="#222"/></svg>
<div class="a" style="left:252px;top:163px;width:12px;height:14px;background:#f3f3f3;border:1px solid #e5e5e5;box-sizing:border-box"></div>
<svg class="a" style="left:253.00px;top:164.00px" width="10.00" height="11.00" viewBox="0 0 10 11"><path d="M7,1.5 L2,1.5 L2,9.5 L8,9.5 L8,5 M4,7 L8.5,1.5" fill="none" stroke="#555" stroke-width="1.1"/></svg>
<div class="a" style="left:267px;top:80px;width:735px;height:110px;background:#fff;box-shadow:0 0 7px rgba(0,0,0,0.3);border-radius:3px 3px 0 0"></div>
<div class="a" style="left:267px;top:80px;width:735px;height:19px;background:#ececec;border-bottom:1px solid #e2e2e2;box-sizing:border-box;border-radius:3px 3px 0 0"></div>
<div class="a t" style="left:484.0px;top:81.5px;width:300px;height:16px;line-height:16px;text-align:center;font-size:10px;color:#444"><b>编</b><b>辑</b><b>回</b><b>写</b><b>公</b><b>式</b>-<b>导</b><b>入</b><b>数</b><b>据</b></div>
<div class="a t" style="left:982.0px;top:81.0px;width:14px;height:16px;line-height:16px;text-align:center;font-size:14px;color:#8a8a8a">×</div>
<div class="a" style="left:378px;top:99px;width:1px;height:90px;background:#e3e3e3"></div>
<div class="a" style="left:280px;top:108px;width:91px;height:26px;background:#ececec"></div>
<div class="a t" style="left:280.5px;top:113.0px;width:90px;height:16px;line-height:16px;text-align:center;font-size:10.5px;color:#6db5e8"><b>手</b><b>动</b><b>触</b><b>发</b></div>
<div class="a t" style="left:280.5px;top:145.0px;width:90px;height:16px;line-height:16px;text-align:center;font-size:10.5px;color:#333"><b>定</b><b>时</b><b>触</b><b>发</b></div>
<div class="a" style="left:384px;top:99px;width:556px;height:5px;background:#e8f6fb"></div>
<div class="a" style="left:384px;top:104px;width:556px;height:23px;background:#c5eaf6"></div>
<div class="a" style="left:412px;top:99px;width:1px;height:28px;background:#d6edf4"></div>
<div class="a" style="left:557px;top:99px;width:1px;height:28px;background:#d6edf4"></div>
<div class="a" style="left:705px;top:99px;width:1px;height:28px;background:#d6edf4"></div>
<div class="a" style="left:852px;top:99px;width:1px;height:28px;background:#d6edf4"></div>
<div class="a t" style="left:412px;top:108.0px;height:16px;line-height:16px;font-size:10.6px;color:#333"><b>导</b><b>入</b><b>数</b><b>据</b></div>
<div class="a t" style="left:705px;top:108.0px;height:16px;line-height:16px;font-size:10.6px;color:#333"><b>操</b><b>作</b><b>后</b></div>
<div class="a" style="left:852px;top:109px;width:13px;height:13px;background:#f4fbfe;border-radius:1px"></div>
<svg class="a" style="left:853.00px;top:111.00px" width="11.00" height="9.00" viewBox="0 0 11 9"><path d="M1.5,4.5 L4.5,7.5 L9.5,1.5" fill="none" stroke="#111" stroke-width="1.5"/></svg>
<div class="a" style="left:985px;top:99px;width:1px;height:90px;background:#e6e6e6"></div>
<div class="a" style="left:216px;top:179px;width:1030px;height:505px;background:#fff"></div>
<div class="a" style="left:223px;top:180px;width:1023px;height:32px;background:#f8f9fa;border-bottom:1px solid #d0d3d7;box-sizing:border-box"></div>
<svg class="a" style="left:235.00px;top:181.50px" width="24.36" height="22.62" viewBox="0 0 28 26"><defs><linearGradient id="lb" x1="0" y1="0" x2="0" y2="1"><stop offset="0" stop-color="#8fd0f5"/><stop offset="0.6" stop-color="#2255c8"/><stop offset="1" stop-color="#101560"/></linearGradient><linearGradient id="lp" x1="0" y1="0" x2="0.6" y2="1"><stop offset="0" stop-color="#fbe6ea"/><stop offset="1" stop-color="#ea5a66"/></linearGradient><linearGradient id="ly" x1="0" y1="0" x2="1" y2="0"><stop offset="0" stop-color="#fff07a"/><stop offset="1" stop-color="#f3a81c"/></linearGradient></defs><polygon points="9,14 24,9 21,22 8,16" fill="#e31212"/><polygon points="10,5 24,9 9,14" fill="url(#lp)"/><polygon points="7,6 10,5.5 8.5,15.5 3,17" fill="url(#lb)"/><polygon points="3,17 8.5,15.5 21,22 19.5,23 5,19.8" fill="url(#ly)"/></svg>
<div class="a t" style="left:259px;top:187.5px;height:13px;line-height:13px;font-size:10.3px;color:#3a3a3a"><b>魔</b><b>方</b><b>网</b><b>表</b></div>
<div class="a t" style="left:259.5px;top:199.0px;height:7px;line-height:7px;font-size:5.5px;font-weight:bold;color:#333">www.mf999.com</div>
<div class="a t" style="left:309px;top:188.0px;height:16px;line-height:16px;font-size:9.4px;color:#454545;"><b>智</b><b>能</b><b>结</b><b>算</b></div>
<svg class="a" style="left:351.00px;top:194.50px" width="5.00" height="4.00" viewBox="0 0 5 4"><polygon points="0,0 5,0 2.5,4" fill="#222"/></svg>
<div class="a" style="left:363px;top:186.5px;width:118px;height:18px;background:#fff;border:1px solid #c9c9c9;box-sizing:border-box;border-radius:2px"></div>
<div class="a t" style="left:370px;top:188.0px;height:16px;line-height:16px;font-size:9.4px;color:#a0a0a0"><b>空</b><b>间</b><b>检</b><b>索</b></div>
<svg class="a" style="left:466.00px;top:190.00px" width="11.00" height="11.00" viewBox="0 0 16 16"><circle cx="7" cy="7" r="5.8" fill="none" stroke="#b5b5b5" stroke-width="1.2"/><path d="M11.2,11.2 L14.8,14.8" stroke="#b5b5b5" stroke-width="1.5" stroke-linecap="round"/></svg>
<div class="a t" style="left:838.5px;top:188.0px;width:40px;height:16px;line-height:16px;text-align:center;font-size:10px;color:#454545;"><b>开</b><b>始</b></div>
<div class="a t" style="left:882.0px;top:188.0px;width:40px;height:16px;line-height:16px;text-align:center;font-size:10px;color:#454545;"><b>首</b><b>页</b></div>
<div class="a t" style="left:924.5px;top:188.0px;width:40px;height:16px;line-height:16px;text-align:center;font-size:10px;color:#454545;"><b>流</b><b>程</b></div>
<div class="a t" style="left:967.0px;top:188.0px;width:40px;height:16px;line-height:16px;text-align:center;font-size:10px;color:#454545;"><b>注</b><b>销</b></div>
<div class="a t" style="left:1010.5px;top:188.0px;width:40px;height:16px;line-height:16px;text-align:center;font-size:10px;color:#454545;"><b>更</b><b>多</b></div>
<svg class="a" style="left:1062.30px;top:190.60px" width="14.40" height="10.80" viewBox="0 0 16 12"><rect x="1" y="0.5" width="14" height="11" rx="2" fill="#4e5668"/><path d="M3,4 L6.5,7.5 L13,2.5" fill="none" stroke="#8e97a6" stroke-width="1.2"/></svg>
<svg class="a" style="left:1102.70px;top:188.80px" width="12.60" height="14.40" viewBox="0 0 14 16"><rect x="1" y="2.5" width="12" height="13" rx="1" fill="#4e5668"/><rect x="4.5" y="0.5" width="5" height="3.5" rx="0.8" fill="#4e5668" stroke="#f5f6f8" stroke-width="0.8"/><path d="M3.5,9.5 L6,12 L10.5,7.5" fill="none" stroke="#a0a8b5" stroke-width="1.3"/></svg>
<svg class="a" style="left:1141.30px;top:189.70px" width="14.40" height="12.60" viewBox="0 0 16 14"><path d="M5.5,0.5 Q8,2.5 10.5,0.5 L15.5,3 L13.5,7 L12,6.3 L12,13.5 L4,13.5 L4,6.3 L2.5,7 L0.5,3 Z" fill="#4e5668"/></svg>
<div class="a" style="left:1169px;top:191.5px;width:77px;height:9px;background:linear-gradient(90deg,#add5f8 0px 5px,#a1c6e7 5px 10px,transparent 10px 15px,#aed6f9 15px 20px,#acd3f6 20px 25px,#9fc4e4 25px 30px,#a7cdef 30px 35px,#abd2f5 35px 40px,#abd2f5 40px 45px,#aad0f3 45px 50px,#a5cbed 50px 55px,#a7cdef 55px 60px,#a1c5e6 60px 65px,transparent 65px 70px,#a8cef0 70px 75px,#a7cdef 75px 77px) top/100% 50% no-repeat,linear-gradient(90deg,#aed6f9 0px 5px,#afd7fb 5px 10px,#a8cef0 10px 15px,#9ec3e3 15px 20px,#a6ccee 20px 25px,#afd7fa 25px 30px,#a8cff1 30px 35px,#9ec2e2 35px 40px,#9ec3e3 40px 45px,#a4caeb 45px 50px,#a8cff1 50px 55px,transparent 55px 60px,#b1d9fd 60px 65px,#b2dbff 65px 70px,#9dc1e1 70px 75px,#aad1f4 75px 77px) bottom/100% 50% no-repeat;filter:blur(0.6px);opacity:0.75"></div>
<div class="a" style="left:223px;top:212px;width:1023px;height:25px;background:#fafbfc"></div>
<div class="a t" style="left:234.0px;top:215.0px;width:40px;height:16px;line-height:16px;text-align:center;font-size:9.2px;color:#454545;"><b>首</b><b>页</b></div>
<div class="a t" style="left:300px;top:215.0px;height:16px;line-height:16px;font-size:9.2px;color:#454545;"><b>海</b><b>外</b><b>广</b><b>告</b><b>业</b>...</div>
<div class="a t" style="left:362.0px;top:215.5px;width:12px;height:16px;line-height:16px;text-align:center;font-size:9px;color:#777">×</div>
<div class="a" style="left:300px;top:235.5px;width:72.5px;height:2px;background:#2f7fd4"></div>
<svg class="a" style="left:1183.00px;top:216.00px" width="9.00" height="14.00" viewBox="0 0 9 14"><polygon points="8,1 8,13 1,7" fill="#d6d8dc"/></svg>
<svg class="a" style="left:1204.00px;top:216.00px" width="9.00" height="14.00" viewBox="0 0 9 14"><polygon points="1,1 1,13 8,7" fill="#d6d8dc"/></svg>
<svg class="a" style="left:1230.50px;top:216.50px" width="13.00" height="13.00" viewBox="0 0 13 13"><rect x="0.6" y="0.6" width="5" height="5" fill="none" stroke="#86c4ec" stroke-width="1.1"/><rect x="7.4" y="0.6" width="5" height="5" fill="none" stroke="#86c4ec" stroke-width="1.1"/><rect x="0.6" y="7.4" width="5" height="5" fill="none" stroke="#86c4ec" stroke-width="1.1"/><circle cx="9.9" cy="9.9" r="2.6" fill="none" stroke="#86c4ec" stroke-width="1.1"/></svg>
<div class="a" style="left:223px;top:237px;width:185px;height:446px;background:#596375"></div>
<div class="a t" style="left:254.5px;top:241.0px;width:120px;height:16px;line-height:16px;text-align:center;font-size:9.4px;color:#fff"><b>海</b><b>外</b><b>广</b><b>告</b><b>业</b><b>务</b><b>线</b></div>
<div class="a" style="left:224px;top:264.5px;width:183px;height:1px;background:#c9ced6"></div>
<svg class="a" style="left:310.00px;top:260.00px" width="10.00" height="5.50" viewBox="0 0 10 5.5"><path d="M0,5 L5,0.8 L10,5" fill="#596375" stroke="#c9ced6" stroke-width="1"/></svg>
<svg class="a" style="left:231.76px;top:274.12px" width="15.48" height="13.76" viewBox="0 0 18 16"><path d="M1.5,6.5 L9,1.5 L16.5,6.5 L16.5,12.5 Q16.5,14.5 14.5,14.5 L3.5,14.5 Q1.5,14.5 1.5,12.5 Z" fill="none" stroke="#fff" stroke-width="1.6" stroke-linejoin="round"/></svg>
<svg class="a" style="left:254.76px;top:274.19px" width="15.48" height="14.62" viewBox="0 0 18 17"><path d="M9,1.5 L1.5,1.5 L1.5,15.5 L15.5,15.5 L15.5,8" fill="none" stroke="#fff" stroke-width="1.6"/><path d="M6,11 L7,8 L14,1.5 L16,3.5 L9,10 Z" fill="none" stroke="#fff" stroke-width="1.4"/></svg>
<svg class="a" style="left:278.76px;top:273.26px" width="15.48" height="15.48" viewBox="0 0 18 18"><circle cx="9" cy="9" r="7.5" fill="none" stroke="#fff" stroke-width="1.6"/><rect x="8" y="7.5" width="2" height="6" fill="#fff"/><circle cx="9" cy="5" r="1.2" fill="#fff"/></svg>
<svg class="a" style="left:302.12px;top:274.19px" width="13.76" height="14.62" viewBox="0 0 16 17"><path d="M1,3.5 L15,3.5 M5.5,3.5 L5.5,1.2 L10.5,1.2 L10.5,3.5 M2.8,3.5 L3.5,15.8 L12.5,15.8 L13.2,3.5" fill="none" stroke="#fff" stroke-width="1.6" stroke-linejoin="round"/><path d="M6,6.5 L6,13.5 M8,6.5 L8,13.5 M10,6.5 L10,13.5" stroke="#fff" stroke-width="1"/></svg>
<svg class="a" style="left:324.26px;top:273.26px" width="15.48" height="15.48" viewBox="0 0 18 18"><path d="M9,15.5 L1.5,15.5 L1.5,1.5 L14.5,1.5 L14.5,8" fill="none" stroke="#fff" stroke-width="1.6"/><path d="M4,5 L8,5 M4,7.5 L7,7.5" stroke="#fff" stroke-width="1"/><circle cx="12.5" cy="13" r="4" fill="#596375" stroke="#fff" stroke-width="1.3"/><path d="M10.5,13 L14.5,13 M13,11.5 L14.5,13 L13,14.5" fill="none" stroke="#fff" stroke-width="1"/></svg>
<svg class="a" style="left:347.76px;top:273.26px" width="15.48" height="15.48" viewBox="0 0 18 18"><ellipse cx="7.5" cy="3.5" rx="6" ry="2.2" fill="none" stroke="#fff" stroke-width="1.6"/><path d="M1.5,3.5 L1.5,14 Q1.5,16 7.5,16 M13.5,3.5 L13.5,8 M1.5,7 Q1.5,9.3 7.5,9.3 M1.5,10.5 Q1.5,12.6 6.5,12.6" fill="none" stroke="#fff" stroke-width="1.6"/><circle cx="12.5" cy="13" r="4" fill="#596375" stroke="#fff" stroke-width="1.3"/><path d="M10.5,13 L14.5,13 M13,11.5 L14.5,13 L13,14.5" fill="none" stroke="#fff" stroke-width="1"/></svg>
<svg class="a" style="left:371.62px;top:274.12px" width="13.76" height="13.76" viewBox="0 0 16 16"><path d="M2,2 L6,6 M14,2 L10,6 M2,14 L6,10 M14,14 L10,10" stroke="#fff" stroke-width="1.6"/><path d="M1,1 L6,1 L1,6 Z M15,1 L10,1 L15,6 Z M1,15 L6,15 L1,10 Z M15,15 L10,15 L15,10 Z" fill="#fff"/></svg>
<svg class="a" style="left:232.00px;top:303.50px" width="9.00" height="6.00" viewBox="0 0 9 6"><polygon points="0,0 9,0 4.5,6" fill="#fff"/></svg>
<div class="a t" style="left:244px;top:298.0px;height:16px;line-height:16px;font-size:9.4px;color:#fff"><b>海</b><b>外</b><b>广</b><b>告</b><b>业</b><b>务</b><b>线</b></div>
<div class="a" style="left:246px;top:321.1px;width:8px;height:9.5px;background:#bfc3ca;border-radius:1px"></div>
<div class="a" style="left:247.5px;top:323.1px;width:5px;height:3.5px;background:#8d939d"></div>
<div class="a t" style="left:257px;top:317.1px;height:16px;line-height:16px;font-size:9.4px;color:#fff"><b>收</b><b>款</b><b>合</b><b>同</b><b>表</b></div>
<svg class="a" style="left:245.00px;top:341.70px" width="9.00" height="6.00" viewBox="0 0 9 6"><polygon points="0,0 9,0 4.5,6" fill="#fff"/></svg>
<div class="a t" style="left:257px;top:336.2px;height:16px;line-height:16px;font-size:9.4px;color:#fff"><b>流</b><b>水</b><b>数</b><b>据</b><b>表</b></div>
<div class="a" style="left:248px;top:355.8px;width:81px;height:15px;background:#1fa8f4;border-radius:2px"></div>
<div class="a" style="left:259px;top:359.3px;width:8px;height:9.5px;background:#eef8ff;border-radius:1px"></div>
<div class="a" style="left:260.5px;top:361.3px;width:5px;height:3.5px;background:#a9d5f0"></div>
<div class="a t" style="left:269.5px;top:355.3px;height:16px;line-height:16px;font-size:9.4px;color:#0b568c">XDATA<b>数</b><b>据</b></div>
<div class="a" style="left:246px;top:378.4px;width:8px;height:9.5px;background:#bfc3ca;border-radius:1px"></div>
<div class="a" style="left:247.5px;top:380.4px;width:5px;height:3.5px;background:#8d939d"></div>
<div class="a t" style="left:257px;top:374.4px;height:16px;line-height:16px;font-size:9.4px;color:#fff"><b>流</b><b>水</b><b>数</b><b>据</b><b>重</b><b>分</b><b>类</b><b>底</b><b>表</b></div>
<svg class="a" style="left:245.00px;top:399.00px" width="9.00" height="6.00" viewBox="0 0 9 6"><polygon points="0,0 9,0 4.5,6" fill="#fff"/></svg>
<div class="a t" style="left:257px;top:393.5px;height:16px;line-height:16px;font-size:9.4px;color:#fff"><b>收</b><b>入</b><b>计</b><b>提</b><b>列</b><b>表</b></div>
<div class="a" style="left:259px;top:416.6px;width:8px;height:9.5px;background:#bfc3ca;border-radius:1px"></div>
<div class="a" style="left:260.5px;top:418.6px;width:5px;height:3.5px;background:#8d939d"></div>
<div class="a" style="left:270px;top:415.6px;width:37px;height:10px;background:linear-gradient(90deg,#cacacd 0px 6px,#9e9ea1 6px 12px,#b5b5b8 12px 18px,#c9c9cc 18px 24px,#a0a0a3 24px 30px,#c4c4c7 30px 36px,#9a9a9d 36px 37px) top/100% 50% no-repeat,linear-gradient(90deg,#bdbdc0 0px 6px,#a0a0a3 6px 12px,#bdbdc0 12px 18px,#cacacd 18px 24px,#a6a6a9 24px 30px,#b4b4b7 30px 36px,#a6a6a9 36px 37px) bottom/100% 50% no-repeat;background-color:#9ea4ae;filter:blur(0.8px);opacity:1"></div>
<svg class="a" style="left:245.00px;top:437.20px" width="9.00" height="6.00" viewBox="0 0 9 6"><polygon points="0,0 9,0 4.5,6" fill="#fff"/></svg>
<div class="a t" style="left:257px;top:431.7px;height:16px;line-height:16px;font-size:9.4px;color:#fff"><b>不</b><b>参</b><b>与</b><b>计</b><b>提</b><b>计</b><b>算</b><b>配</b><b>置</b></div>
<div class="a" style="left:259px;top:454.8px;width:8px;height:9.5px;background:#bfc3ca;border-radius:1px"></div>
<div class="a" style="left:260.5px;top:456.8px;width:5px;height:3.5px;background:#8d939d"></div>
<div class="a" style="left:270px;top:453.8px;width:36px;height:10px;background:linear-gradient(90deg,#a5a5a8 0px 6px,#98989b 6px 12px,#afafb2 12px 18px,#a7a7aa 18px 24px,#aeaeb1 24px 30px,#c8c8cb 30px 36px) top/100% 50% no-repeat,linear-gradient(90deg,#c7c7ca 0px 6px,#bebec1 6px 12px,#cdcdd0 12px 18px,#b7b7ba 18px 24px,#9c9c9f 24px 30px,#b8b8bb 30px 36px) bottom/100% 50% no-repeat;background-color:#9ea4ae;filter:blur(0.8px);opacity:1"></div>
<div class="a" style="left:259px;top:473.9px;width:8px;height:9.5px;background:#bfc3ca;border-radius:1px"></div>
<div class="a" style="left:260.5px;top:475.9px;width:5px;height:3.5px;background:#8d939d"></div>
<div class="a" style="left:270px;top:472.9px;width:36px;height:10px;background:linear-gradient(90deg,#afafb2 0px 6px,#adadb0 6px 12px,#adadb0 12px 18px,#adadb0 18px 24px,#9b9b9e 24px 30px,#a1a1a4 30px 36px) top/100% 50% no-repeat,linear-gradient(90deg,#99999c 0px 6px,#b7b7ba 6px 12px,#bebec1 12px 18px,#cdcdd0 18px 24px,#c0c0c3 24px 30px,#c4c4c7 30px 36px) bottom/100% 50% no-repeat;background-color:#9ea4ae;filter:blur(0.8px);opacity:1"></div>
<div class="a" style="left:259px;top:493.0px;width:8px;height:9.5px;background:#bfc3ca;border-radius:1px"></div>
<div class="a" style="left:260.5px;top:495.0px;width:5px;height:3.5px;background:#8d939d"></div>
<div class="a" style="left:270px;top:492.0px;width:45px;height:10px;background:linear-gradient(90deg,transparent 0px 6px,transparent 6px 12px,#bdbdc0 12px 18px,#b0b0b3 18px 24px,#99999c 24px 30px,#a4a4a7 30px 36px,#98989b 36px 42px,transparent 42px 45px) top/100% 50% no-repeat,linear-gradient(90deg,transparent 0px 6px,#9c9c9f 6px 12px,#b8b8bb 12px 18px,#bbbbbe 18px 24px,#9e9ea1 24px 30px,#bdbdc0 30px 36px,#a0a0a3 36px 42px,#c9c9cc 42px 45px) bottom/100% 50% no-repeat;background-color:#9ea4ae;filter:blur(0.8px);opacity:1"></div>
<div class="a" style="left:259px;top:512.1px;width:8px;height:9.5px;background:#bfc3ca;border-radius:1px"></div>
<div class="a" style="left:260.5px;top:514.1px;width:5px;height:3.5px;background:#8d939d"></div>
<div class="a" style="left:270px;top:511.1px;width:56px;height:10px;background:linear-gradient(90deg,#9f9fa2 0px 6px,#9a9a9d 6px 12px,#cdcdd0 12px 18px,#a7a7aa 18px 24px,#a6a6a9 24px 30px,#99999c 30px 36px,#b9b9bc 36px 42px,#bcbcbf 42px 48px,#b2b2b5 48px 54px,#b7b7ba 54px 56px) top/100% 50% no-repeat,linear-gradient(90deg,#a5a5a8 0px 6px,#969699 6px 12px,#b8b8bb 12px 18px,transparent 18px 24px,#a0a0a3 24px 30px,#c7c7ca 30px 36px,#bdbdc0 36px 42px,#a2a2a5 42px 48px,#a2a2a5 48px 54px,#bfbfc2 54px 56px) bottom/100% 50% no-repeat;background-color:#9ea4ae;filter:blur(0.8px);opacity:1"></div>
<svg class="a" style="left:245.00px;top:532.70px" width="9.00" height="6.00" viewBox="0 0 9 6"><polygon points="0,0 9,0 4.5,6" fill="#fff"/></svg>
<div class="a t" style="left:257px;top:527.2px;height:16px;line-height:16px;font-size:9.4px;color:#fff"><b>重</b><b>分</b><b>类</b><b>规</b><b>则</b><b>配</b><b>置</b></div>
<div class="a" style="left:259px;top:550.3px;width:8px;height:9.5px;background:#bfc3ca;border-radius:1px"></div>
<div class="a" style="left:260.5px;top:552.3px;width:5px;height:3.5px;background:#8d939d"></div>
<div class="a" style="left:270px;top:549.3px;width:63px;height:10px;background:linear-gradient(90deg,#bfbfc2 0px 6px,#bdbdc0 6px 12px,#a9a9ac 12px 18px,#bebec1 18px 24px,#c4c4c7 24px 30px,#c3c3c6 30px 36px,#aeaeb1 36px 42px,#c5c5c8 42px 48px,#9b9b9e 48px 54px,#b2b2b5 54px 60px,#9c9c9f 60px 63px) top/100% 50% no-repeat,linear-gradient(90deg,#bfbfc2 0px 6px,transparent 6px 12px,#c5c5c8 12px 18px,#cccccf 18px 24px,#99999c 24px 30px,#b9b9bc 30px 36px,#c1c1c4 36px 42px,#b7b7ba 42px 48px,#a8a8ab 48px 54px,#a3a3a6 54px 60px,#b6b6b9 60px 63px) bottom/100% 50% no-repeat;background-color:#9ea4ae;filter:blur(0.8px);opacity:1"></div>
<svg class="a" style="left:245.00px;top:570.90px" width="9.00" height="6.00" viewBox="0 0 9 6"><polygon points="0,0 9,0 4.5,6" fill="#fff"/></svg>
<div class="a t" style="left:257px;top:565.4px;height:16px;line-height:16px;font-size:9.4px;color:#fff"><b>基</b><b>础</b><b>配</b><b>置</b><b>表</b></div>
<div class="a" style="left:259px;top:588.5px;width:8px;height:9.5px;background:#bfc3ca;border-radius:1px"></div>
<div class="a" style="left:260.5px;top:590.5px;width:5px;height:3.5px;background:#8d939d"></div>
<div class="a" style="left:270px;top:587.5px;width:36px;height:10px;background:linear-gradient(90deg,transparent 0px 6px,#a5a5a8 6px 12px,#a2a2a5 12px 18px,#c5c5c8 18px 24px,#a2a2a5 24px 30px,#ababae 30px 36px) top/100% 50% no-repeat,linear-gradient(90deg,#aeaeb1 0px 6px,#bebec1 6px 12px,#c0c0c3 12px 18px,#b8b8bb 18px 24px,#cbcbce 24px 30px,#969699 30px 36px) bottom/100% 50% no-repeat;background-color:#9ea4ae;filter:blur(0.8px);opacity:1"></div>
<div class="a" style="left:259px;top:607.6px;width:8px;height:9.5px;background:#bfc3ca;border-radius:1px"></div>
<div class="a" style="left:260.5px;top:609.6px;width:5px;height:3.5px;background:#8d939d"></div>
<div class="a" style="left:270px;top:606.6px;width:36px;height:10px;background:linear-gradient(90deg,#b1b1b4 0px 6px,#a4a4a7 6px 12px,#a9a9ac 12px 18px,#afafb2 18px 24px,#9a9a9d 24px 30px,#a0a0a3 30px 36px) top/100% 50% no-repeat,linear-gradient(90deg,#97979a 0px 6px,#bdbdc0 6px 12px,#acacaf 12px 18px,#c2c2c5 18px 24px,transparent 24px 30px,#c2c2c5 30px 36px) bottom/100% 50% no-repeat;background-color:#9ea4ae;filter:blur(0.8px);opacity:1"></div>
<div class="a" style="left:259px;top:626.7px;width:8px;height:9.5px;background:#bfc3ca;border-radius:1px"></div>
<div class="a" style="left:260.5px;top:628.7px;width:5px;height:3.5px;background:#8d939d"></div>
<div class="a" style="left:270px;top:625.7px;width:55px;height:10px;background:linear-gradient(90deg,#98989b 0px 6px,#c5c5c8 6px 12px,#cccccf 12px 18px,#adadb0 18px 24px,#cacacd 24px 30px,#c0c0c3 30px 36px,#cdcdd0 36px 42px,#c3c3c6 42px 48px,#9c9c9f 48px 54px,#a3a3a6 54px 55px) top/100% 50% no-repeat,linear-gradient(90deg,#98989b 0px 6px,#c9c9cc 6px 12px,#9b9b9e 12px 18px,#bebec1 18px 24px,#b4b4b7 24px 30px,#9c9c9f 30px 36px,#bfbfc2 36px 42px,#aaaaad 42px 48px,#a6a6a9 48px 54px,transparent 54px 55px) bottom/100% 50% no-repeat;background-color:#9ea4ae;filter:blur(0.8px);opacity:1"></div>
<div class="a" style="left:259px;top:645.8px;width:8px;height:9.5px;background:#bfc3ca;border-radius:1px"></div>
<div class="a" style="left:260.5px;top:647.8px;width:5px;height:3.5px;background:#8d939d"></div>
<div class="a" style="left:270px;top:644.8px;width:55px;height:10px;background:linear-gradient(90deg,#a8a8ab 0px 6px,#c6c6c9 6px 12px,#aaaaad 12px 18px,#bcbcbf 18px 24px,#cccccf 24px 30px,#c5c5c8 30px 36px,transparent 36px 42px,#b1b1b4 42px 48px,#9c9c9f 48px 54px,#c3c3c6 54px 55px) top/100% 50% no-repeat,linear-gradient(90deg,#bababd 0px 6px,#cdcdd0 6px 12px,#bababd 12px 18px,#a0a0a3 18px 24px,#b7b7ba 24px 30px,#c6c6c9 30px 36px,#99999c 36px 42px,transparent 42px 48px,#b5b5b8 48px 54px,#cacacd 54px 55px) bottom/100% 50% no-repeat;background-color:#9ea4ae;filter:blur(0.8px);opacity:1"></div>
<div class="a" style="left:408px;top:370px;width:3px;height:313px;background:#eceef0"></div>
<div class="a" style="left:408px;top:303px;width:3px;height:67px;background:#474f5c"></div>
<svg class="a" style="left:408.00px;top:316.00px" width="3.00" height="6.00" viewBox="0 0 3 6"><polygon points="0,0 3,3 0,6" fill="#fff"/></svg>
<div class="a" style="left:408px;top:336px;width:3px;height:1px;background:#fff"></div>
<svg class="a" style="left:408.00px;top:349.50px" width="3.00" height="6.00" viewBox="0 0 3 6"><polygon points="3,0 0,3 3,6" fill="#fff"/></svg>
<div class="a" style="left:411px;top:238px;width:835px;height:26px;background:#737a87"></div>
<svg class="a" style="left:416.75px;top:244.25px" width="13.50" height="13.50" viewBox="0 0 16 16"><circle cx="7" cy="7" r="5.8" fill="none" stroke="#fff" stroke-width="1.5"/><path d="M11.2,11.2 L14.8,14.8" stroke="#fff" stroke-width="1.8" stroke-linecap="round"/></svg>
<svg class="a" style="left:441.75px;top:244.25px" width="13.50" height="13.50" viewBox="0 0 16 16"><g transform="translate(16,0) scale(-1,1)"><path d="M2.5,7 A5.7,5.7 0 0 1 13,5" fill="none" stroke="#fff" stroke-width="1.5"/><path d="M13.5,9 A5.7,5.7 0 0 1 3,11" fill="none" stroke="#fff" stroke-width="1.5"/><path d="M14.5,1.5 L14.5,6.5 L9.5,6.5 Z M1.5,14.5 L1.5,9.5 L6.5,9.5 Z" fill="#fff"/></g></svg>
<svg class="a" style="left:464.75px;top:244.25px" width="13.50" height="13.50" viewBox="0 0 16 16"><path d="M8,14.5 L1.5,14.5 L1.5,1.5 L12.5,1.5 L12.5,7" fill="none" stroke="#fff" stroke-width="1.4"/><path d="M4,5 L9,5 M4,7.5 L8,7.5" stroke="#fff" stroke-width="1"/><circle cx="11.5" cy="12" r="3.5" fill="none" stroke="#fff" stroke-width="1.2"/><circle cx="11.5" cy="12" r="1" fill="#fff"/></svg>
<svg class="a" style="left:487.25px;top:244.25px" width="13.50" height="13.50" viewBox="0 0 16 16"><rect x="2" y="1" width="2" height="14" fill="#fff"/><rect x="6" y="1" width="2" height="2" fill="#fff"/><rect x="6" y="5" width="2" height="10" fill="#fff"/><rect x="10" y="1" width="2" height="2" fill="#fff"/><rect x="10" y="5" width="2" height="2" fill="#fff"/><circle cx="11" cy="11.5" r="3.2" fill="none" stroke="#fff" stroke-width="1.3"/></svg>
<div class="a" style="left:411px;top:264px;width:835px;height:27px;background:#e9eaec"></div>
<div class="a t" style="left:401.0px;top:270.5px;width:59px;height:16px;line-height:16px;text-align:center;font-size:9.2px;color:#444"><b>次</b><b>序</b></div>
<div class="a t" style="left:437.5px;top:270.5px;width:84px;height:16px;line-height:16px;text-align:center;font-size:9.2px;color:#444">id</div>
<div class="a t" style="left:501.5px;top:270.5px;width:91px;height:16px;line-height:16px;text-align:center;font-size:9.2px;color:#444"><b>日</b><b>期</b></div>
<div class="a t" style="left:572.5px;top:270.5px;width:102px;height:16px;line-height:16px;text-align:center;font-size:9.2px;color:#444"><b>一</b><b>级</b>dsp<b>名</b><b>称</b></div>
<div class="a t" style="left:654.5px;top:270.5px;width:97px;height:16px;line-height:16px;text-align:center;font-size:9.2px;color:#444"><b>二</b><b>级</b>dsp<b>名</b><b>称</b></div>
<div class="a t" style="left:731.5px;top:270.5px;width:92px;height:16px;line-height:16px;text-align:center;font-size:9.2px;color:#444"><b>国</b><b>家</b><b>或</b><b>地</b><b>区</b><b>编</b><b>码</b></div>
<div class="a t" style="left:803.5px;top:270.5px;width:122px;height:16px;line-height:16px;text-align:center;font-size:9.2px;color:#444"><b>国</b><b>家</b><b>或</b><b>地</b><b>区</b><b>名</b><b>称</b></div>
<div class="a t" style="left:905.5px;top:270.5px;width:101px;height:16px;line-height:16px;text-align:center;font-size:9.2px;color:#444"><b>广</b><b>告</b><b>位</b></div>
<div class="a t" style="left:986.5px;top:270.5px;width:123px;height:16px;line-height:16px;text-align:center;font-size:9.2px;color:#444"><b>广</b><b>告</b><b>位</b><b>名</b><b>称</b></div>
<div class="a t" style="left:1089.5px;top:270.5px;width:92px;height:16px;line-height:16px;text-align:center;font-size:9.2px;color:#444"><b>媒</b><b>体</b>ID</div>
<div class="a t" style="left:1161.5px;top:270.5px;width:92px;height:16px;line-height:16px;text-align:center;font-size:9.2px;color:#444"><b>媒</b><b>体</b><b>名</b><b>称</b></div>
<svg class="a" style="left:505.00px;top:273.00px" width="8.00" height="10.00" viewBox="0 0 8 10"><path d="M4,1 L7.5,5 L5.5,5 L5.5,9 L2.5,9 L2.5,5 L0.5,5 Z" fill="#5aa8e6"/></svg>
<div class="a" style="left:411px;top:291px;width:835px;height:28px;background:#ffffff;border-bottom:1px solid #e6e7ea;box-sizing:border-box"></div>
<div class="a t" style="left:415px;top:297.3px;height:16px;line-height:16px;font-size:9.8px;color:#4a4a4a;letter-spacing:-0.15px">1</div>
<div class="a t" style="left:454px;top:297.3px;height:16px;line-height:16px;font-size:9.8px;color:#4a4a4a;letter-spacing:-0.15px">146730080</div>
<div class="a t" style="left:517px;top:297.3px;height:16px;line-height:16px;font-size:9.8px;color:#4a4a4a;letter-spacing:-0.15px">20200501</div>
<div class="a" style="left:587px;top:299.5px;width:19px;height:10px;background:linear-gradient(90deg,#adadb0 0px 5px,#e4e4e7 5px 10px,#e1e1e4 10px 15px,#bfbfc2 15px 19px) top/100% 50% no-repeat,linear-gradient(90deg,#a8a8ab 0px 5px,#d6d6d9 5px 10px,#a5a5a8 10px 15px,#c7c7ca 15px 19px) bottom/100% 50% no-repeat;filter:blur(0.9px);opacity:1"></div>
<div class="a" style="left:670px;top:299.5px;width:32px;height:10px;background:linear-gradient(90deg,#c2c2c5 0px 5px,#b2b2b5 5px 10px,#a8a8ab 10px 15px,transparent 15px 20px,#a6a6a9 20px 25px,#d5d5d8 25px 30px,#dbdbde 30px 32px) top/100% 50% no-repeat,linear-gradient(90deg,#c1c1c4 0px 5px,#e4e4e7 5px 10px,#d1d1d4 10px 15px,#c1c1c4 15px 20px,#cacacd 20px 25px,#dadadd 25px 30px,#b1b1b4 30px 32px) bottom/100% 50% no-repeat;filter:blur(0.9px);opacity:1"></div>
<div class="a" style="left:748px;top:299.5px;width:11px;height:10px;background:linear-gradient(90deg,#cacacd 0px 5px,#cfcfd2 5px 10px,#dbdbde 10px 11px) top/100% 50% no-repeat,linear-gradient(90deg,#bdbdc0 0px 5px,#e4e4e7 5px 10px,#d7d7da 10px 11px) bottom/100% 50% no-repeat;filter:blur(0.9px);opacity:1"></div>
<div class="a" style="left:818px;top:299.5px;width:31px;height:10px;background:linear-gradient(90deg,#a9a9ac 0px 5px,#d8d8db 5px 10px,#bbbbbe 10px 15px,#d4d4d7 15px 20px,#b2b2b5 20px 25px,#d7d7da 25px 30px,#a8a8ab 30px 31px) top/100% 50% no-repeat,linear-gradient(90deg,#cccccf 0px 5px,#d7d7da 5px 10px,#bababd 10px 15px,#a6a6a9 15px 20px,#c2c2c5 20px 25px,#d1d1d4 25px 30px,#d2d2d5 30px 31px) bottom/100% 50% no-repeat;filter:blur(0.9px);opacity:1"></div>
<div class="a" style="left:921px;top:296.0px;width:54px;height:8px;background:linear-gradient(90deg,#c7c7ca 0px 5px,#a5a5a8 5px 10px,#b5b5b8 10px 15px,#bfbfc2 15px 20px,#acacaf 20px 25px,#d3d3d6 25px 30px,#bebec1 30px 35px,#d9d9dc 35px 40px,#d2d2d5 40px 45px,#a5a5a8 45px 50px,#cfcfd2 50px 54px) top/100% 50% no-repeat,linear-gradient(90deg,#a8a8ab 0px 5px,#bbbbbe 5px 10px,#bcbcbf 10px 15px,#c5c5c8 15px 20px,transparent 20px 25px,#aeaeb1 25px 30px,#a7a7aa 30px 35px,#c8c8cb 35px 40px,#b3b3b6 40px 45px,#bcbcbf 45px 50px,#adadb0 50px 54px) bottom/100% 50% no-repeat;filter:blur(0.9px);opacity:1"></div>
<div class="a" style="left:921px;top:305.0px;width:54px;height:8px;background:linear-gradient(90deg,#c5c5c8 0px 5px,#bababd 5px 10px,#cacacd 10px 15px,#ceced1 15px 20px,#b3b3b6 20px 25px,transparent 25px 30px,#dadadd 30px 35px,#c6c6c9 35px 40px,#bfbfc2 40px 45px,#dcdcdf 45px 50px,#a7a7aa 50px 54px) top/100% 50% no-repeat,linear-gradient(90deg,#d7d7da 0px 5px,#b9b9bc 5px 10px,#dbdbde 10px 15px,#c1c1c4 15px 20px,#dedee1 20px 25px,#a8a8ab 25px 30px,#ceced1 30px 35px,#dbdbde 35px 40px,#cbcbce 40px 45px,#c0c0c3 45px 50px,#cccccf 50px 54px) bottom/100% 50% no-repeat;filter:blur(0.9px);opacity:1"></div>
<div class="a" style="left:1003px;top:296.0px;width:55px;height:8px;background:linear-gradient(90deg,#aeaeb1 0px 5px,#cbcbce 5px 10px,#dadadd 10px 15px,#b5b5b8 15px 20px,transparent 20px 25px,#a9a9ac 25px 30px,#c0c0c3 30px 35px,#dfdfe2 35px 40px,#a9a9ac 40px 45px,#d1d1d4 45px 50px,#dcdcdf 50px 55px) top/100% 50% no-repeat,linear-gradient(90deg,#e4e4e7 0px 5px,#d6d6d9 5px 10px,#e4e4e7 10px 15px,transparent 15px 20px,#d8d8db 20px 25px,#a7a7aa 25px 30px,#ceced1 30px 35px,#b6b6b9 35px 40px,#c0c0c3 40px 45px,#b1b1b4 45px 50px,#d1d1d4 50px 55px) bottom/100% 50% no-repeat;filter:blur(0.9px);opacity:1"></div>
<div class="a" style="left:1003px;top:305.0px;width:55px;height:8px;background:linear-gradient(90deg,#e3e3e6 0px 5px,#c3c3c6 5px 10px,#aaaaad 10px 15px,#bababd 15px 20px,#c0c0c3 20px 25px,#cfcfd2 25px 30px,#c5c5c8 30px 35px,#d0d0d3 35px 40px,#c3c3c6 40px 45px,#e3e3e6 45px 50px,#b2b2b5 50px 55px) top/100% 50% no-repeat,linear-gradient(90deg,#d9d9dc 0px 5px,#b7b7ba 5px 10px,#d0d0d3 10px 15px,#d5d5d8 15px 20px,#c1c1c4 20px 25px,#c7c7ca 25px 30px,#cacacd 30px 35px,#b3b3b6 35px 40px,#c8c8cb 40px 45px,#aaaaad 45px 50px,#a6a6a9 50px 55px) bottom/100% 50% no-repeat;filter:blur(0.9px);opacity:1"></div>
<div class="a" style="left:1104px;top:299.5px;width:46px;height:10px;background:linear-gradient(90deg,#a6a6a9 0px 5px,#b3b3b6 5px 10px,#aaaaad 10px 15px,#dadadd 15px 20px,#dedee1 20px 25px,#c3c3c6 25px 30px,#b2b2b5 30px 35px,#d5d5d8 35px 40px,#cacacd 40px 45px,#e2e2e5 45px 46px) top/100% 50% no-repeat,linear-gradient(90deg,#bfbfc2 0px 5px,#aaaaad 5px 10px,transparent 10px 15px,#cacacd 15px 20px,#cdcdd0 20px 25px,#cdcdd0 25px 30px,#adadb0 30px 35px,#dfdfe2 35px 40px,#c0c0c3 40px 45px,#e1e1e4 45px 46px) bottom/100% 50% no-repeat;filter:blur(0.9px);opacity:1"></div>
<div class="a" style="left:1177px;top:299.5px;width:42px;height:10px;background:linear-gradient(90deg,#c6c6c9 0px 5px,#bfbfc2 5px 10px,#c4c4c7 10px 15px,#c8c8cb 15px 20px,#dedee1 20px 25px,#d0d0d3 25px 30px,#d6d6d9 30px 35px,#aaaaad 35px 40px,#cdcdd0 40px 42px) top/100% 50% no-repeat,linear-gradient(90deg,#cbcbce 0px 5px,#b1b1b4 5px 10px,#b0b0b3 10px 15px,#a7a7aa 15px 20px,#d8d8db 20px 25px,#aeaeb1 25px 30px,#a7a7aa 30px 35px,#cacacd 35px 40px,#d2d2d5 40px 42px) bottom/100% 50% no-repeat;filter:blur(0.9px);opacity:1"></div>
<div class="a" style="left:411px;top:318px;width:835px;height:28px;background:#f5f6f8;border-bottom:1px solid #e6e7ea;box-sizing:border-box"></div>
<div class="a t" style="left:415px;top:324.3px;height:16px;line-height:16px;font-size:9.8px;color:#4a4a4a;letter-spacing:-0.15px">2</div>
<div class="a t" style="left:454px;top:324.3px;height:16px;line-height:16px;font-size:9.8px;color:#4a4a4a;letter-spacing:-0.15px">146730081</div>
<div class="a t" style="left:517px;top:324.3px;height:16px;line-height:16px;font-size:9.8px;color:#4a4a4a;letter-spacing:-0.15px">20200501</div>
<div class="a" style="left:587px;top:326.5px;width:29px;height:10px;background:linear-gradient(90deg,#c4c4c7 0px 5px,#c5c5c8 5px 10px,#aeaeb1 10px 15px,#cbcbce 15px 20px,#d7d7da 20px 25px,#b4b4b7 25px 29px) top/100% 50% no-repeat,linear-gradient(90deg,#cdcdd0 0px 5px,#c6c6c9 5px 10px,#b8b8bb 10px 15px,#c8c8cb 15px 20px,#adadb0 20px 25px,#d0d0d3 25px 29px) bottom/100% 50% no-repeat;filter:blur(0.9px);opacity:1"></div>
<div class="a" style="left:670px;top:326.5px;width:38px;height:10px;background:linear-gradient(90deg,transparent 0px 5px,#d5d5d8 5px 10px,#dddde0 10px 15px,#b1b1b4 15px 20px,#b3b3b6 20px 25px,#d3d3d6 25px 30px,#b1b1b4 30px 35px,#e3e3e6 35px 38px) top/100% 50% no-repeat,linear-gradient(90deg,#bdbdc0 0px 5px,#c0c0c3 5px 10px,#c9c9cc 10px 15px,#b2b2b5 15px 20px,#b0b0b3 20px 25px,#b4b4b7 25px 30px,transparent 30px 35px,#b3b3b6 35px 38px) bottom/100% 50% no-repeat;filter:blur(0.9px);opacity:1"></div>
<div class="a" style="left:748px;top:326.5px;width:14px;height:10px;background:linear-gradient(90deg,#b0b0b3 0px 5px,#bababd 5px 10px,#dfdfe2 10px 14px) top/100% 50% no-repeat,linear-gradient(90deg,#dfdfe2 0px 5px,#b1b1b4 5px 10px,#d7d7da 10px 14px) bottom/100% 50% no-repeat;filter:blur(0.9px);opacity:1"></div>
<div class="a" style="left:818px;top:326.5px;width:66px;height:10px;background:linear-gradient(90deg,#e3e3e6 0px 5px,#b7b7ba 5px 10px,#c7c7ca 10px 15px,#a7a7aa 15px 20px,#d8d8db 20px 25px,#dbdbde 25px 30px,transparent 30px 35px,#d4d4d7 35px 40px,#c6c6c9 40px 45px,#bdbdc0 45px 50px,transparent 50px 55px,#c5c5c8 55px 60px,#b1b1b4 60px 65px,transparent 65px 66px) top/100% 50% no-repeat,linear-gradient(90deg,#a5a5a8 0px 5px,#c9c9cc 5px 10px,#d2d2d5 10px 15px,#b3b3b6 15px 20px,transparent 20px 25px,#bebec1 25px 30px,transparent 30px 35px,#c6c6c9 35px 40px,#bfbfc2 40px 45px,#cfcfd2 45px 50px,#d4d4d7 50px 55px,transparent 55px 60px,#b9b9bc 60px 65px,#bebec1 65px 66px) bottom/100% 50% no-repeat;filter:blur(0.9px);opacity:1"></div>
<div class="a" style="left:921px;top:326.5px;width:40px;height:10px;background:linear-gradient(90deg,#d6d6d9 0px 5px,#d6d6d9 5px 10px,#cdcdd0 10px 15px,#a9a9ac 15px 20px,#dbdbde 20px 25px,#d0d0d3 25px 30px,#b2b2b5 30px 35px,#ababae 35px 40px) top/100% 50% no-repeat,linear-gradient(90deg,#b7b7ba 0px 5px,#e3e3e6 5px 10px,#d5d5d8 10px 15px,#b2b2b5 15px 20px,#d4d4d7 20px 25px,#dadadd 25px 30px,#c1c1c4 30px 35px,#bbbbbe 35px 40px) bottom/100% 50% no-repeat;filter:blur(0.9px);opacity:1"></div>
<div class="a" style="left:1003px;top:323.0px;width:87px;height:8px;background:linear-gradient(90deg,#c1c1c4 0px 5px,#d2d2d5 5px 10px,#aaaaad 10px 15px,#e0e0e3 15px 20px,#e1e1e4 20px 25px,#aeaeb1 25px 30px,#acacaf 30px 35px,#b1b1b4 35px 40px,#adadb0 40px 45px,#b3b3b6 45px 50px,#bababd 50px 55px,#cccccf 55px 60px,transparent 60px 65px,#b8b8bb 65px 70px,transparent 70px 75px,#e4e4e7 75px 80px,#a7a7aa 80px 85px,#c7c7ca 85px 87px) top/100% 50% no-repeat,linear-gradient(90deg,#a5a5a8 0px 5px,#c3c3c6 5px 10px,#a5a5a8 10px 15px,#b3b3b6 15px 20px,#d7d7da 20px 25px,#cacacd 25px 30px,#cfcfd2 30px 35px,transparent 35px 40px,#cccccf 40px 45px,#dddde0 45px 50px,transparent 50px 55px,#dddde0 55px 60px,#d6d6d9 60px 65px,#dbdbde 65px 70px,#dadadd 70px 75px,#a8a8ab 75px 80px,#e1e1e4 80px 85px,#b4b4b7 85px 87px) bottom/100% 50% no-repeat;filter:blur(0.9px);opacity:1"></div>
<div class="a" style="left:1003px;top:332.0px;width:17px;height:8px;background:linear-gradient(90deg,#c3c3c6 0px 5px,#aeaeb1 5px 10px,#b0b0b3 10px 15px,#ababae 15px 17px) top/100% 50% no-repeat,linear-gradient(90deg,transparent 0px 5px,#c9c9cc 5px 10px,#dbdbde 10px 15px,#adadb0 15px 17px) bottom/100% 50% no-repeat;filter:blur(0.9px);opacity:1"></div>
<div class="a" style="left:1104px;top:318.5px;width:64px;height:8px;background:linear-gradient(90deg,#bcbcbf 0px 5px,#dfdfe2 5px 10px,#d6d6d9 10px 15px,#d3d3d6 15px 20px,#d1d1d4 20px 25px,#cccccf 25px 30px,transparent 30px 35px,#dfdfe2 35px 40px,#c8c8cb 40px 45px,#cccccf 45px 50px,#b8b8bb 50px 55px,#a8a8ab 55px 60px,#e3e3e6 60px 64px) top/100% 50% no-repeat,linear-gradient(90deg,#cacacd 0px 5px,#bbbbbe 5px 10px,#a8a8ab 10px 15px,#adadb0 15px 20px,#c2c2c5 20px 25px,#cccccf 25px 30px,#e1e1e4 30px 35px,#d1d1d4 35px 40px,#c4c4c7 40px 45px,#d2d2d5 45px 50px,#dcdcdf 50px 55px,#aaaaad 55px 60px,#c7c7ca 60px 64px) bottom/100% 50% no-repeat;filter:blur(0.9px);opacity:1"></div>
<div class="a" style="left:1104px;top:327.5px;width:64px;height:8px;background:linear-gradient(90deg,#bebec1 0px 5px,#bebec1 5px 10px,#c1c1c4 10px 15px,#c9c9cc 15px 20px,#b3b3b6 20px 25px,#b3b3b6 25px 30px,#aeaeb1 30px 35px,#c3c3c6 35px 40px,#bfbfc2 40px 45px,#d5d5d8 45px 50px,#afafb2 50px 55px,#e2e2e5 55px 60px,#afafb2 60px 64px) top/100% 50% no-repeat,linear-gradient(90deg,#b0b0b3 0px 5px,#c2c2c5 5px 10px,#b2b2b5 10px 15px,#e1e1e4 15px 20px,#adadb0 20px 25px,#d3d3d6 25px 30px,#d0d0d3 30px 35px,#bababd 35px 40px,#b1b1b4 40px 45px,#aaaaad 45px 50px,#cdcdd0 50px 55px,transparent 55px 60px,#d5d5d8 60px 64px) bottom/100% 50% no-repeat;filter:blur(0.9px);opacity:1"></div>
<div class="a" style="left:1104px;top:336.5px;width:24px;height:8px;background:linear-gradient(90deg,#b2b2b5 0px 5px,#bababd 5px 10px,#dbdbde 10px 15px,transparent 15px 20px,#adadb0 20px 24px) top/100% 50% no-repeat,linear-gradient(90deg,#d0d0d3 0px 5px,#bdbdc0 5px 10px,#dcdcdf 10px 15px,#dadadd 15px 20px,#c4c4c7 20px 24px) bottom/100% 50% no-repeat;filter:blur(0.9px);opacity:1"></div>
<div class="a" style="left:1177px;top:326.5px;width:56px;height:10px;background:linear-gradient(90deg,#c0c0c3 0px 5px,#b4b4b7 5px 10px,#acacaf 10px 15px,#c0c0c3 15px 20px,#b3b3b6 20px 25px,#a6a6a9 25px 30px,#cccccf 30px 35px,transparent 35px 40px,#c3c3c6 40px 45px,#b6b6b9 45px 50px,#c8c8cb 50px 55px,#a5a5a8 55px 56px) top/100% 50% no-repeat,linear-gradient(90deg,#dadadd 0px 5px,#c8c8cb 5px 10px,#dedee1 10px 15px,#ababae 15px 20px,#b8b8bb 20px 25px,#c6c6c9 25px 30px,#bebec1 30px 35px,#cccccf 35px 40px,#e4e4e7 40px 45px,#a8a8ab 45px 50px,#ceced1 50px 55px,#cdcdd0 55px 56px) bottom/100% 50% no-repeat;filter:blur(0.9px);opacity:1"></div>
<div class="a" style="left:411px;top:345px;width:835px;height:28px;background:#ffffff;border-bottom:1px solid #e6e7ea;box-sizing:border-box"></div>
<div class="a t" style="left:415px;top:351.3px;height:16px;line-height:16px;font-size:9.8px;color:#4a4a4a;letter-spacing:-0.15px">3</div>
<div class="a t" style="left:454px;top:351.3px;height:16px;line-height:16px;font-size:9.8px;color:#4a4a4a;letter-spacing:-0.15px">146730082</div>
<div class="a t" style="left:517px;top:351.3px;height:16px;line-height:16px;font-size:9.8px;color:#4a4a4a;letter-spacing:-0.15px">20200501</div>
<div class="a" style="left:587px;top:353.5px;width:29px;height:10px;background:linear-gradient(90deg,#c8c8cb 0px 5px,#bebec1 5px 10px,#c5c5c8 10px 15px,#cfcfd2 15px 20px,#d8d8db 20px 25px,#c3c3c6 25px 29px) top/100% 50% no-repeat,linear-gradient(90deg,#aeaeb1 0px 5px,#afafb2 5px 10px,#dbdbde 10px 15px,#ababae 15px 20px,#d1d1d4 20px 25px,transparent 25px 29px) bottom/100% 50% no-repeat;filter:blur(0.9px);opacity:1"></div>
<div class="a" style="left:670px;top:353.5px;width:48px;height:10px;background:linear-gradient(90deg,#e2e2e5 0px 5px,#d0d0d3 5px 10px,#c2c2c5 10px 15px,#b7b7ba 15px 20px,#d7d7da 20px 25px,#a9a9ac 25px 30px,#afafb2 30px 35px,#b8b8bb 35px 40px,#ababae 40px 45px,#a6a6a9 45px 48px) top/100% 50% no-repeat,linear-gradient(90deg,#b8b8bb 0px 5px,#dadadd 5px 10px,#dddde0 10px 15px,#e0e0e3 15px 20px,#d3d3d6 20px 25px,#c6c6c9 25px 30px,#d2d2d5 30px 35px,#acacaf 35px 40px,#bababd 40px 45px,#e3e3e6 45px 48px) bottom/100% 50% no-repeat;filter:blur(0.9px);opacity:1"></div>
<div class="a" style="left:748px;top:353.5px;width:15px;height:10px;background:linear-gradient(90deg,#cfcfd2 0px 5px,#acacaf 5px 10px,#b3b3b6 10px 15px) top/100% 50% no-repeat,linear-gradient(90deg,#afafb2 0px 5px,#e0e0e3 5px 10px,#b4b4b7 10px 15px) bottom/100% 50% no-repeat;filter:blur(0.9px);opacity:1"></div>
<div class="a" style="left:818px;top:353.5px;width:38px;height:10px;background:linear-gradient(90deg,#c9c9cc 0px 5px,#e2e2e5 5px 10px,#b4b4b7 10px 15px,transparent 15px 20px,#bdbdc0 20px 25px,#b1b1b4 25px 30px,transparent 30px 35px,#dfdfe2 35px 38px) top/100% 50% no-repeat,linear-gradient(90deg,#bcbcbf 0px 5px,#d2d2d5 5px 10px,#bdbdc0 10px 15px,#bdbdc0 15px 20px,#cfcfd2 20px 25px,#adadb0 25px 30px,#aaaaad 30px 35px,#afafb2 35px 38px) bottom/100% 50% no-repeat;filter:blur(0.9px);opacity:1"></div>
<div class="a" style="left:921px;top:353.5px;width:40px;height:10px;background:linear-gradient(90deg,#b6b6b9 0px 5px,#e2e2e5 5px 10px,#d4d4d7 10px 15px,#a8a8ab 15px 20px,#b9b9bc 20px 25px,#e0e0e3 25px 30px,#dcdcdf 30px 35px,#bfbfc2 35px 40px) top/100% 50% no-repeat,linear-gradient(90deg,#b8b8bb 0px 5px,#cfcfd2 5px 10px,#acacaf 10px 15px,#b4b4b7 15px 20px,#afafb2 20px 25px,#cdcdd0 25px 30px,#b5b5b8 30px 35px,#b0b0b3 35px 40px) bottom/100% 50% no-repeat;filter:blur(0.9px);opacity:1"></div>
<div class="a" style="left:1003px;top:353.5px;width:59px;height:10px;background:linear-gradient(90deg,#bfbfc2 0px 5px,#a7a7aa 5px 10px,#dddde0 10px 15px,#dddde0 15px 20px,#c1c1c4 20px 25px,#bebec1 25px 30px,#dddde0 30px 35px,#bfbfc2 35px 40px,#bdbdc0 40px 45px,#d1d1d4 45px 50px,#bebec1 50px 55px,#d5d5d8 55px 59px) top/100% 50% no-repeat,linear-gradient(90deg,#adadb0 0px 5px,#aeaeb1 5px 10px,#ababae 10px 15px,#b5b5b8 15px 20px,transparent 20px 25px,#e3e3e6 25px 30px,#dedee1 30px 35px,#b6b6b9 35px 40px,#e3e3e6 40px 45px,#cfcfd2 45px 50px,#d5d5d8 50px 55px,#adadb0 55px 59px) bottom/100% 50% no-repeat;filter:blur(0.9px);opacity:1"></div>
<div class="a" style="left:1104px;top:350.0px;width:64px;height:8px;background:linear-gradient(90deg,#d3d3d6 0px 5px,#cbcbce 5px 10px,#bdbdc0 10px 15px,#c1c1c4 15px 20px,#c3c3c6 20px 25px,#d1d1d4 25px 30px,#cacacd 30px 35px,#d8d8db 35px 40px,#dadadd 40px 45px,#bcbcbf 45px 50px,#e0e0e3 50px 55px,#acacaf 55px 60px,#c3c3c6 60px 64px) top/100% 50% no-repeat,linear-gradient(90deg,#b1b1b4 0px 5px,#c4c4c7 5px 10px,#dcdcdf 10px 15px,#c6c6c9 15px 20px,#aaaaad 20px 25px,#acacaf 25px 30px,#b4b4b7 30px 35px,#c4c4c7 35px 40px,#d0d0d3 40px 45px,#b8b8bb 45px 50px,#a7a7aa 50px 55px,#a8a8ab 55px 60px,#c5c5c8 60px 64px) bottom/100% 50% no-repeat;filter:blur(0.9px);opacity:1"></div>
<div class="a" style="left:1104px;top:359.0px;width:24px;height:8px;background:linear-gradient(90deg,#a5a5a8 0px 5px,#afafb2 5px 10px,#d4d4d7 10px 15px,#b1b1b4 15px 20px,#b8b8bb 20px 24px) top/100% 50% no-repeat,linear-gradient(90deg,#c9c9cc 0px 5px,#aaaaad 5px 10px,#b4b4b7 10px 15px,#b8b8bb 15px 20px,#d0d0d3 20px 24px) bottom/100% 50% no-repeat;filter:blur(0.9px);opacity:1"></div>
<div class="a" style="left:1177px;top:353.5px;width:47px;height:10px;background:linear-gradient(90deg,#bebec1 0px 5px,#c6c6c9 5px 10px,#d9d9dc 10px 15px,#b6b6b9 15px 20px,#dcdcdf 20px 25px,#d6d6d9 25px 30px,#dcdcdf 30px 35px,#b9b9bc 35px 40px,#b4b4b7 40px 45px,#dcdcdf 45px 47px) top/100% 50% no-repeat,linear-gradient(90deg,#b7b7ba 0px 5px,#e3e3e6 5px 10px,#d6d6d9 10px 15px,#bbbbbe 15px 20px,#b0b0b3 20px 25px,#aeaeb1 25px 30px,#dadadd 30px 35px,transparent 35px 40px,#a6a6a9 40px 45px,#a6a6a9 45px 47px) bottom/100% 50% no-repeat;filter:blur(0.9px);opacity:1"></div>
<div class="a" style="left:411px;top:372px;width:835px;height:29px;background:#f5f6f8;border-bottom:1px solid #e6e7ea;box-sizing:border-box"></div>
<div class="a t" style="left:415px;top:378.8px;height:16px;line-height:16px;font-size:9.8px;color:#4a4a4a;letter-spacing:-0.15px">4</div>
<div class="a t" style="left:454px;top:378.8px;height:16px;line-height:16px;font-size:9.8px;color:#4a4a4a;letter-spacing:-0.15px">146730083</div>
<div class="a t" style="left:517px;top:378.8px;height:16px;line-height:16px;font-size:9.8px;color:#4a4a4a;letter-spacing:-0.15px">20200501</div>
<div class="a" style="left:587px;top:381.0px;width:29px;height:10px;background:linear-gradient(90deg,#a9a9ac 0px 5px,#bfbfc2 5px 10px,#d1d1d4 10px 15px,#dddde0 15px 20px,#b5b5b8 20px 25px,#bebec1 25px 29px) top/100% 50% no-repeat,linear-gradient(90deg,#dfdfe2 0px 5px,#ababae 5px 10px,#cdcdd0 10px 15px,#ceced1 15px 20px,#b1b1b4 20px 25px,#ababae 25px 29px) bottom/100% 50% no-repeat;filter:blur(0.9px);opacity:1"></div>
<div class="a" style="left:670px;top:381.0px;width:61px;height:10px;background:linear-gradient(90deg,#cdcdd0 0px 5px,#cfcfd2 5px 10px,#b8b8bb 10px 15px,#cccccf 15px 20px,#cacacd 20px 25px,#b9b9bc 25px 30px,#bfbfc2 30px 35px,#adadb0 35px 40px,#bfbfc2 40px 45px,#a6a6a9 45px 50px,#cbcbce 50px 55px,#c3c3c6 55px 60px,#b1b1b4 60px 61px) top/100% 50% no-repeat,linear-gradient(90deg,#cfcfd2 0px 5px,#dfdfe2 5px 10px,#c4c4c7 10px 15px,#a9a9ac 15px 20px,#d6d6d9 20px 25px,#dedee1 25px 30px,#dadadd 30px 35px,#a7a7aa 35px 40px,#c3c3c6 40px 45px,#dddde0 45px 50px,#bdbdc0 50px 55px,#cccccf 55px 60px,#b0b0b3 60px 61px) bottom/100% 50% no-repeat;filter:blur(0.9px);opacity:1"></div>
<div class="a" style="left:748px;top:381.0px;width:10px;height:10px;background:linear-gradient(90deg,#d0d0d3 0px 5px,#c4c4c7 5px 10px) top/100% 50% no-repeat,linear-gradient(90deg,#bcbcbf 0px 5px,#c3c3c6 5px 10px) bottom/100% 50% no-repeat;filter:blur(0.9px);opacity:1"></div>
<div class="a" style="left:818px;top:381.0px;width:38px;height:10px;background:linear-gradient(90deg,#dcdcdf 0px 5px,#cccccf 5px 10px,#c4c4c7 10px 15px,transparent 15px 20px,#d8d8db 20px 25px,#aaaaad 25px 30px,#b9b9bc 30px 35px,#a8a8ab 35px 38px) top/100% 50% no-repeat,linear-gradient(90deg,#d7d7da 0px 5px,#dbdbde 5px 10px,#a9a9ac 10px 15px,#c5c5c8 15px 20px,#c5c5c8 20px 25px,#a7a7aa 25px 30px,#c0c0c3 30px 35px,#aaaaad 35px 38px) bottom/100% 50% no-repeat;filter:blur(0.9px);opacity:1"></div>
<div class="a" style="left:921px;top:381.0px;width:40px;height:10px;background:linear-gradient(90deg,#c9c9cc 0px 5px,#b3b3b6 5px 10px,transparent 10px 15px,#a8a8ab 15px 20px,#c6c6c9 20px 25px,#bababd 25px 30px,#a8a8ab 30px 35px,transparent 35px 40px) top/100% 50% no-repeat,linear-gradient(90deg,#bebec1 0px 5px,#d9d9dc 5px 10px,#bbbbbe 10px 15px,#e2e2e5 15px 20px,#dedee1 20px 25px,#c6c6c9 25px 30px,#e2e2e5 30px 35px,#d6d6d9 35px 40px) bottom/100% 50% no-repeat;filter:blur(0.9px);opacity:1"></div>
<div class="a" style="left:1003px;top:381.0px;width:83px;height:10px;background:linear-gradient(90deg,#dedee1 0px 5px,#e2e2e5 5px 10px,transparent 10px 15px,#d3d3d6 15px 20px,#b7b7ba 20px 25px,#dcdcdf 25px 30px,#bfbfc2 30px 35px,#a6a6a9 35px 40px,transparent 40px 45px,#ceced1 45px 50px,#d0d0d3 50px 55px,#d2d2d5 55px 60px,transparent 60px 65px,#b3b3b6 65px 70px,#bababd 70px 75px,#b4b4b7 75px 80px,#c1c1c4 80px 83px) top/100% 50% no-repeat,linear-gradient(90deg,#b0b0b3 0px 5px,transparent 5px 10px,#cbcbce 10px 15px,transparent 15px 20px,#b5b5b8 20px 25px,#aeaeb1 25px 30px,#afafb2 30px 35px,#a9a9ac 35px 40px,#c3c3c6 40px 45px,#d7d7da 45px 50px,#b3b3b6 50px 55px,#e4e4e7 55px 60px,#c3c3c6 60px 65px,#cbcbce 65px 70px,#d1d1d4 70px 75px,#c2c2c5 75px 80px,#b4b4b7 80px 83px) bottom/100% 50% no-repeat;filter:blur(0.9px);opacity:1"></div>
<div class="a" style="left:1104px;top:377.5px;width:60px;height:8px;background:linear-gradient(90deg,#a6a6a9 0px 5px,#bebec1 5px 10px,#e3e3e6 10px 15px,#c4c4c7 15px 20px,#bbbbbe 20px 25px,#bebec1 25px 30px,#cbcbce 30px 35px,#a6a6a9 35px 40px,#dbdbde 40px 45px,#d4d4d7 45px 50px,#d9d9dc 50px 55px,#bebec1 55px 60px) top/100% 50% no-repeat,linear-gradient(90deg,#d6d6d9 0px 5px,#dcdcdf 5px 10px,#c7c7ca 10px 15px,transparent 15px 20px,#d4d4d7 20px 25px,#b5b5b8 25px 30px,#ceced1 30px 35px,#b4b4b7 35px 40px,#e1e1e4 40px 45px,#ceced1 45px 50px,#d3d3d6 50px 55px,#bfbfc2 55px 60px) bottom/100% 50% no-repeat;filter:blur(0.9px);opacity:1"></div>
<div class="a" style="left:1104px;top:386.5px;width:60px;height:8px;background:linear-gradient(90deg,#c4c4c7 0px 5px,#bebec1 5px 10px,#e0e0e3 10px 15px,#c6c6c9 15px 20px,#bbbbbe 20px 25px,#acacaf 25px 30px,#d7d7da 30px 35px,#d7d7da 35px 40px,#bababd 40px 45px,#cccccf 45px 50px,transparent 50px 55px,#ababae 55px 60px) top/100% 50% no-repeat,linear-gradient(90deg,#bcbcbf 0px 5px,#dbdbde 5px 10px,#c7c7ca 10px 15px,#ceced1 15px 20px,#a6a6a9 20px 25px,#d3d3d6 25px 30px,#dddde0 30px 35px,#c7c7ca 35px 40px,#b1b1b4 40px 45px,#d3d3d6 45px 50px,#acacaf 50px 55px,#a8a8ab 55px 60px) bottom/100% 50% no-repeat;filter:blur(0.9px);opacity:1"></div>
<div class="a" style="left:1177px;top:377.5px;width:62px;height:8px;background:linear-gradient(90deg,#c4c4c7 0px 5px,#c1c1c4 5px 10px,#bdbdc0 10px 15px,#e4e4e7 15px 20px,#d4d4d7 20px 25px,#bababd 25px 30px,#c5c5c8 30px 35px,#cbcbce 35px 40px,#e4e4e7 40px 45px,#d3d3d6 45px 50px,#e0e0e3 50px 55px,#c0c0c3 55px 60px,#bebec1 60px 62px) top/100% 50% no-repeat,linear-gradient(90deg,#cccccf 0px 5px,#afafb2 5px 10px,#c2c2c5 10px 15px,#a5a5a8 15px 20px,#ababae 20px 25px,#dddde0 25px 30px,#e4e4e7 30px 35px,#ababae 35px 40px,#dcdcdf 40px 45px,#c9c9cc 45px 50px,#cccccf 50px 55px,#afafb2 55px 60px,#bdbdc0 60px 62px) bottom/100% 50% no-repeat;filter:blur(0.9px);opacity:1"></div>
<div class="a" style="left:1177px;top:386.5px;width:22px;height:8px;background:linear-gradient(90deg,#e2e2e5 0px 5px,#cacacd 5px 10px,#dbdbde 10px 15px,#b5b5b8 15px 20px,transparent 20px 22px) top/100% 50% no-repeat,linear-gradient(90deg,#a7a7aa 0px 5px,#aeaeb1 5px 10px,#d8d8db 10px 15px,transparent 15px 20px,#dcdcdf 20px 22px) bottom/100% 50% no-repeat;filter:blur(0.9px);opacity:1"></div>
<div class="a" style="left:411px;top:400px;width:835px;height:38px;background:#ffffff;border-bottom:1px solid #e6e7ea;box-sizing:border-box"></div>
<div class="a t" style="left:415px;top:411.3px;height:16px;line-height:16px;font-size:9.8px;color:#4a4a4a;letter-spacing:-0.15px">5</div>
<div class="a t" style="left:454px;top:411.3px;height:16px;line-height:16px;font-size:9.8px;color:#4a4a4a;letter-spacing:-0.15px">146730084</div>
<div class="a t" style="left:517px;top:411.3px;height:16px;line-height:16px;font-size:9.8px;color:#4a4a4a;letter-spacing:-0.15px">20200501</div>
<div class="a" style="left:587px;top:413.5px;width:19px;height:10px;background:linear-gradient(90deg,#c0c0c3 0px 5px,#e2e2e5 5px 10px,#d3d3d6 10px 15px,#a8a8ab 15px 19px) top/100% 50% no-repeat,linear-gradient(90deg,#a9a9ac 0px 5px,#d1d1d4 5px 10px,#c6c6c9 10px 15px,#acacaf 15px 19px) bottom/100% 50% no-repeat;filter:blur(0.9px);opacity:1"></div>
<div class="a" style="left:670px;top:413.5px;width:32px;height:10px;background:linear-gradient(90deg,#d3d3d6 0px 5px,#bebec1 5px 10px,#b6b6b9 10px 15px,#cdcdd0 15px 20px,#d8d8db 20px 25px,#acacaf 25px 30px,#b8b8bb 30px 32px) top/100% 50% no-repeat,linear-gradient(90deg,#d9d9dc 0px 5px,#c4c4c7 5px 10px,#b8b8bb 10px 15px,#dedee1 15px 20px,#e2e2e5 20px 25px,#d1d1d4 25px 30px,#c2c2c5 30px 32px) bottom/100% 50% no-repeat;filter:blur(0.9px);opacity:1"></div>
<div class="a" style="left:748px;top:413.5px;width:10px;height:10px;background:linear-gradient(90deg,#afafb2 0px 5px,transparent 5px 10px) top/100% 50% no-repeat,linear-gradient(90deg,#ababae 0px 5px,#d7d7da 5px 10px) bottom/100% 50% no-repeat;filter:blur(0.9px);opacity:1"></div>
<div class="a" style="left:818px;top:413.5px;width:20px;height:10px;background:linear-gradient(90deg,#c5c5c8 0px 5px,#d6d6d9 5px 10px,#bcbcbf 10px 15px,#cfcfd2 15px 20px) top/100% 50% no-repeat,linear-gradient(90deg,#bdbdc0 0px 5px,#e2e2e5 5px 10px,#bbbbbe 10px 15px,#cbcbce 15px 20px) bottom/100% 50% no-repeat;filter:blur(0.9px);opacity:1"></div>
<div class="a" style="left:921px;top:413.5px;width:45px;height:10px;background:linear-gradient(90deg,#dbdbde 0px 5px,#d5d5d8 5px 10px,#b5b5b8 10px 15px,#d8d8db 15px 20px,#dfdfe2 20px 25px,#cccccf 25px 30px,#e1e1e4 30px 35px,#c2c2c5 35px 40px,#c0c0c3 40px 45px) top/100% 50% no-repeat,linear-gradient(90deg,#b6b6b9 0px 5px,#c8c8cb 5px 10px,#ceced1 10px 15px,#b1b1b4 15px 20px,#a6a6a9 20px 25px,#afafb2 25px 30px,#d5d5d8 30px 35px,#bdbdc0 35px 40px,#c5c5c8 40px 45px) bottom/100% 50% no-repeat;filter:blur(0.9px);opacity:1"></div>
<div class="a" style="left:1003px;top:413.5px;width:55px;height:10px;background:linear-gradient(90deg,#e1e1e4 0px 5px,#cfcfd2 5px 10px,#b9b9bc 10px 15px,#d1d1d4 15px 20px,#d5d5d8 20px 25px,#a7a7aa 25px 30px,#dcdcdf 30px 35px,#e0e0e3 35px 40px,#d8d8db 40px 45px,#c0c0c3 45px 50px,#d4d4d7 50px 55px) top/100% 50% no-repeat,linear-gradient(90deg,#c6c6c9 0px 5px,#a8a8ab 5px 10px,#ceced1 10px 15px,transparent 15px 20px,#d5d5d8 20px 25px,#ababae 25px 30px,#a9a9ac 30px 35px,#d7d7da 35px 40px,#a9a9ac 40px 45px,#e1e1e4 45px 50px,#b5b5b8 50px 55px) bottom/100% 50% no-repeat;filter:blur(0.9px);opacity:1"></div>
<div class="a" style="left:1104px;top:405.5px;width:64px;height:8px;background:linear-gradient(90deg,#b2b2b5 0px 5px,#d9d9dc 5px 10px,#a5a5a8 10px 15px,#ababae 15px 20px,#dadadd 20px 25px,#acacaf 25px 30px,#cacacd 30px 35px,#d5d5d8 35px 40px,#e1e1e4 40px 45px,#e2e2e5 45px 50px,#d9d9dc 50px 55px,#d5d5d8 55px 60px,#bfbfc2 60px 64px) top/100% 50% no-repeat,linear-gradient(90deg,#cbcbce 0px 5px,#c4c4c7 5px 10px,#dbdbde 10px 15px,#c4c4c7 15px 20px,#e1e1e4 20px 25px,#b2b2b5 25px 30px,#e3e3e6 30px 35px,#bbbbbe 35px 40px,#ceced1 40px 45px,#b9b9bc 45px 50px,#c9c9cc 50px 55px,#d8d8db 55px 60px,#b1b1b4 60px 64px) bottom/100% 50% no-repeat;filter:blur(0.9px);opacity:1"></div>
<div class="a" style="left:1104px;top:414.5px;width:64px;height:8px;background:linear-gradient(90deg,#acacaf 0px 5px,#d3d3d6 5px 10px,transparent 10px 15px,#d7d7da 15px 20px,#bebec1 20px 25px,#aeaeb1 25px 30px,#d6d6d9 30px 35px,#bbbbbe 35px 40px,#cbcbce 40px 45px,#a6a6a9 45px 50px,#b2b2b5 50px 55px,#cfcfd2 55px 60px,#aaaaad 60px 64px) top/100% 50% no-repeat,linear-gradient(90deg,transparent 0px 5px,#b8b8bb 5px 10px,#dddde0 10px 15px,#d8d8db 15px 20px,#dddde0 20px 25px,#b4b4b7 25px 30px,#a9a9ac 30px 35px,#c3c3c6 35px 40px,#e2e2e5 40px 45px,#ceced1 45px 50px,#bababd 50px 55px,#d2d2d5 55px 60px,#b7b7ba 60px 64px) bottom/100% 50% no-repeat;filter:blur(0.9px);opacity:1"></div>
<div class="a" style="left:1104px;top:423.5px;width:4px;height:8px;background:linear-gradient(90deg,#bbbbbe 0px 4px) top/100% 50% no-repeat,linear-gradient(90deg,#d8d8db 0px 4px) bottom/100% 50% no-repeat;filter:blur(0.9px);opacity:1"></div>
<div class="a" style="left:1177px;top:410.0px;width:58px;height:8px;background:linear-gradient(90deg,#e3e3e6 0px 5px,#d2d2d5 5px 10px,#b9b9bc 10px 15px,transparent 15px 20px,#d5d5d8 20px 25px,#d4d4d7 25px 30px,#c0c0c3 30px 35px,#b6b6b9 35px 40px,#b2b2b5 40px 45px,#aaaaad 45px 50px,#d4d4d7 50px 55px,#ceced1 55px 58px) top/100% 50% no-repeat,linear-gradient(90deg,#a5a5a8 0px 5px,#b3b3b6 5px 10px,transparent 10px 15px,#dfdfe2 15px 20px,#c5c5c8 20px 25px,#d3d3d6 25px 30px,#e3e3e6 30px 35px,#cdcdd0 35px 40px,#b6b6b9 40px 45px,#dedee1 45px 50px,transparent 50px 55px,#bababd 55px 58px) bottom/100% 50% no-repeat;filter:blur(0.9px);opacity:1"></div>
<div class="a" style="left:1177px;top:419.0px;width:10px;height:8px;background:linear-gradient(90deg,#d0d0d3 0px 5px,#b1b1b4 5px 10px) top/100% 50% no-repeat,linear-gradient(90deg,#bbbbbe 0px 5px,#bababd 5px 10px) bottom/100% 50% no-repeat;filter:blur(0.9px);opacity:1"></div>
<div class="a" style="left:411px;top:437px;width:835px;height:28px;background:#f5f6f8;border-bottom:1px solid #e6e7ea;box-sizing:border-box"></div>
<div class="a t" style="left:415px;top:443.3px;height:16px;line-height:16px;font-size:9.8px;color:#4a4a4a;letter-spacing:-0.15px">6</div>
<div class="a t" style="left:454px;top:443.3px;height:16px;line-height:16px;font-size:9.8px;color:#4a4a4a;letter-spacing:-0.15px">146730085</div>
<div class="a t" style="left:517px;top:443.3px;height:16px;line-height:16px;font-size:9.8px;color:#4a4a4a;letter-spacing:-0.15px">20200501</div>
<div class="a" style="left:587px;top:445.5px;width:29px;height:10px;background:linear-gradient(90deg,#dcdcdf 0px 5px,#dedee1 5px 10px,#b1b1b4 10px 15px,#e4e4e7 15px 20px,#b5b5b8 20px 25px,#adadb0 25px 29px) top/100% 50% no-repeat,linear-gradient(90deg,#bababd 0px 5px,#dfdfe2 5px 10px,#a8a8ab 10px 15px,#d6d6d9 15px 20px,#d4d4d7 20px 25px,transparent 25px 29px) bottom/100% 50% no-repeat;filter:blur(0.9px);opacity:1"></div>
<div class="a" style="left:670px;top:445.5px;width:42px;height:10px;background:linear-gradient(90deg,transparent 0px 5px,#e0e0e3 5px 10px,#bfbfc2 10px 15px,#e2e2e5 15px 20px,#bebec1 20px 25px,#bebec1 25px 30px,#ceced1 30px 35px,#d2d2d5 35px 40px,#d8d8db 40px 42px) top/100% 50% no-repeat,linear-gradient(90deg,#b0b0b3 0px 5px,#a7a7aa 5px 10px,#d1d1d4 10px 15px,#dadadd 15px 20px,#d7d7da 20px 25px,#b1b1b4 25px 30px,#dbdbde 30px 35px,#d4d4d7 35px 40px,#c0c0c3 40px 42px) bottom/100% 50% no-repeat;filter:blur(0.9px);opacity:1"></div>
<div class="a" style="left:748px;top:445.5px;width:12px;height:10px;background:linear-gradient(90deg,#cdcdd0 0px 5px,#a6a6a9 5px 10px,#ceced1 10px 12px) top/100% 50% no-repeat,linear-gradient(90deg,#dfdfe2 0px 5px,#bbbbbe 5px 10px,#cfcfd2 10px 12px) bottom/100% 50% no-repeat;filter:blur(0.9px);opacity:1"></div>
<div class="a" style="left:818px;top:445.5px;width:20px;height:10px;background:linear-gradient(90deg,#d0d0d3 0px 5px,#d3d3d6 5px 10px,#a7a7aa 10px 15px,#bababd 15px 20px) top/100% 50% no-repeat,linear-gradient(90deg,#bcbcbf 0px 5px,#b1b1b4 5px 10px,#b1b1b4 10px 15px,#cbcbce 15px 20px) bottom/100% 50% no-repeat;filter:blur(0.9px);opacity:1"></div>
<div class="a" style="left:921px;top:445.5px;width:45px;height:10px;background:linear-gradient(90deg,#c2c2c5 0px 5px,#acacaf 5px 10px,#b0b0b3 10px 15px,#e2e2e5 15px 20px,#b1b1b4 20px 25px,#dcdcdf 25px 30px,#c7c7ca 30px 35px,#d1d1d4 35px 40px,#bababd 40px 45px) top/100% 50% no-repeat,linear-gradient(90deg,#c0c0c3 0px 5px,#c4c4c7 5px 10px,#a6a6a9 10px 15px,#d7d7da 15px 20px,#b4b4b7 20px 25px,#b9b9bc 25px 30px,#c7c7ca 30px 35px,#d5d5d8 35px 40px,#c2c2c5 40px 45px) bottom/100% 50% no-repeat;filter:blur(0.9px);opacity:1"></div>
<div class="a" style="left:1003px;top:445.5px;width:87px;height:10px;background:linear-gradient(90deg,#b2b2b5 0px 5px,#cccccf 5px 10px,#c8c8cb 10px 15px,#afafb2 15px 20px,#e3e3e6 20px 25px,#d3d3d6 25px 30px,#b1b1b4 30px 35px,#bfbfc2 35px 40px,#d9d9dc 40px 45px,#c7c7ca 45px 50px,#c4c4c7 50px 55px,#d8d8db 55px 60px,#aeaeb1 60px 65px,#cbcbce 65px 70px,#c1c1c4 70px 75px,#b9b9bc 75px 80px,#ceced1 80px 85px,#bababd 85px 87px) top/100% 50% no-repeat,linear-gradient(90deg,#b7b7ba 0px 5px,#adadb0 5px 10px,#d5d5d8 10px 15px,#dddde0 15px 20px,#d6d6d9 20px 25px,#dedee1 25px 30px,#dadadd 30px 35px,#aaaaad 35px 40px,#dedee1 40px 45px,#a9a9ac 45px 50px,#b6b6b9 50px 55px,#cdcdd0 55px 60px,#c5c5c8 60px 65px,#dbdbde 65px 70px,#e2e2e5 70px 75px,#cdcdd0 75px 80px,#c7c7ca 80px 85px,#ababae 85px 87px) bottom/100% 50% no-repeat;filter:blur(0.9px);opacity:1"></div>
<div class="a" style="left:1104px;top:442.0px;width:64px;height:8px;background:linear-gradient(90deg,#a9a9ac 0px 5px,#cdcdd0 5px 10px,#e4e4e7 10px 15px,#a7a7aa 15px 20px,#a6a6a9 20px 25px,#ceced1 25px 30px,#bcbcbf 30px 35px,#d7d7da 35px 40px,#cccccf 40px 45px,#d0d0d3 45px 50px,#d9d9dc 50px 55px,#b8b8bb 55px 60px,#aaaaad 60px 64px) top/100% 50% no-repeat,linear-gradient(90deg,#c4c4c7 0px 5px,transparent 5px 10px,#bebec1 10px 15px,#bdbdc0 15px 20px,#c5c5c8 20px 25px,#bfbfc2 25px 30px,#d3d3d6 30px 35px,#d1d1d4 35px 40px,#afafb2 40px 45px,#dcdcdf 45px 50px,#c9c9cc 50px 55px,#cccccf 55px 60px,#dddde0 60px 64px) bottom/100% 50% no-repeat;filter:blur(0.9px);opacity:1"></div>
<div class="a" style="left:1104px;top:451.0px;width:64px;height:8px;background:linear-gradient(90deg,#bebec1 0px 5px,transparent 5px 10px,#bfbfc2 10px 15px,#dadadd 15px 20px,#e3e3e6 20px 25px,#dfdfe2 25px 30px,#bababd 30px 35px,#a7a7aa 35px 40px,#a8a8ab 40px 45px,#d6d6d9 45px 50px,#b4b4b7 50px 55px,#a6a6a9 55px 60px,#cacacd 60px 64px) top/100% 50% no-repeat,linear-gradient(90deg,#b1b1b4 0px 5px,#b9b9bc 5px 10px,transparent 10px 15px,#c5c5c8 15px 20px,transparent 20px 25px,#cccccf 25px 30px,#b6b6b9 30px 35px,#dddde0 35px 40px,#d6d6d9 40px 45px,#e4e4e7 45px 50px,#acacaf 50px 55px,#e0e0e3 55px 60px,#d9d9dc 60px 64px) bottom/100% 50% no-repeat;filter:blur(0.9px);opacity:1"></div>
<div class="a" style="left:1177px;top:445.5px;width:56px;height:10px;background:linear-gradient(90deg,#d2d2d5 0px 5px,#a9a9ac 5px 10px,#dadadd 10px 15px,#c0c0c3 15px 20px,#d7d7da 20px 25px,#c4c4c7 25px 30px,#bdbdc0 30px 35px,#bbbbbe 35px 40px,#cdcdd0 40px 45px,#d9d9dc 45px 50px,#a5a5a8 50px 55px,#c8c8cb 55px 56px) top/100% 50% no-repeat,linear-gradient(90deg,#e4e4e7 0px 5px,#e1e1e4 5px 10px,#dfdfe2 10px 15px,#afafb2 15px 20px,#d2d2d5 20px 25px,#b0b0b3 25px 30px,#b0b0b3 30px 35px,#c8c8cb 35px 40px,#a6a6a9 40px 45px,#afafb2 45px 50px,#b5b5b8 50px 55px,#cfcfd2 55px 56px) bottom/100% 50% no-repeat;filter:blur(0.9px);opacity:1"></div>
<div class="a" style="left:411px;top:464px;width:835px;height:28px;background:#ffffff;border-bottom:1px solid #e6e7ea;box-sizing:border-box"></div>
<div class="a t" style="left:415px;top:470.3px;height:16px;line-height:16px;font-size:9.8px;color:#4a4a4a;letter-spacing:-0.15px">7</div>
<div class="a t" style="left:454px;top:470.3px;height:16px;line-height:16px;font-size:9.8px;color:#4a4a4a;letter-spacing:-0.15px">146730086</div>
<div class="a t" style="left:517px;top:470.3px;height:16px;line-height:16px;font-size:9.8px;color:#4a4a4a;letter-spacing:-0.15px">20200501</div>
<div class="a" style="left:587px;top:472.5px;width:29px;height:10px;background:linear-gradient(90deg,#d1d1d4 0px 5px,#c3c3c6 5px 10px,#e4e4e7 10px 15px,#d1d1d4 15px 20px,transparent 20px 25px,#e3e3e6 25px 29px) top/100% 50% no-repeat,linear-gradient(90deg,#bbbbbe 0px 5px,#d4d4d7 5px 10px,#b0b0b3 10px 15px,#c6c6c9 15px 20px,#e3e3e6 20px 25px,transparent 25px 29px) bottom/100% 50% no-repeat;filter:blur(0.9px);opacity:1"></div>
<div class="a" style="left:670px;top:472.5px;width:42px;height:10px;background:linear-gradient(90deg,#cfcfd2 0px 5px,#dfdfe2 5px 10px,#acacaf 10px 15px,#b3b3b6 15px 20px,#d8d8db 20px 25px,#c1c1c4 25px 30px,#cdcdd0 30px 35px,#bbbbbe 35px 40px,#d3d3d6 40px 42px) top/100% 50% no-repeat,linear-gradient(90deg,#b7b7ba 0px 5px,#c7c7ca 5px 10px,#a7a7aa 10px 15px,#b9b9bc 15px 20px,#a7a7aa 20px 25px,#d3d3d6 25px 30px,transparent 30px 35px,#dbdbde 35px 40px,#a6a6a9 40px 42px) bottom/100% 50% no-repeat;filter:blur(0.9px);opacity:1"></div>
<div class="a" style="left:748px;top:472.5px;width:14px;height:10px;background:linear-gradient(90deg,transparent 0px 5px,#c2c2c5 5px 10px,#dddde0 10px 14px) top/100% 50% no-repeat,linear-gradient(90deg,#bfbfc2 0px 5px,#c4c4c7 5px 10px,#bfbfc2 10px 14px) bottom/100% 50% no-repeat;filter:blur(0.9px);opacity:1"></div>
<div class="a" style="left:818px;top:472.5px;width:28px;height:10px;background:linear-gradient(90deg,#b7b7ba 0px 5px,#ababae 5px 10px,#b7b7ba 10px 15px,#adadb0 15px 20px,#e1e1e4 20px 25px,#b4b4b7 25px 28px) top/100% 50% no-repeat,linear-gradient(90deg,#c9c9cc 0px 5px,#dedee1 5px 10px,#c3c3c6 10px 15px,#c5c5c8 15px 20px,#bbbbbe 20px 25px,#c6c6c9 25px 28px) bottom/100% 50% no-repeat;filter:blur(0.9px);opacity:1"></div>
<div class="a" style="left:921px;top:472.5px;width:45px;height:10px;background:linear-gradient(90deg,#b3b3b6 0px 5px,#a5a5a8 5px 10px,#cccccf 10px 15px,#d2d2d5 15px 20px,#c8c8cb 20px 25px,#cacacd 25px 30px,#b5b5b8 30px 35px,#cfcfd2 35px 40px,#b8b8bb 40px 45px) top/100% 50% no-repeat,linear-gradient(90deg,#c1c1c4 0px 5px,#d5d5d8 5px 10px,#d1d1d4 10px 15px,#b6b6b9 15px 20px,#dfdfe2 20px 25px,#adadb0 25px 30px,#e0e0e3 30px 35px,#e3e3e6 35px 40px,#d7d7da 40px 45px) bottom/100% 50% no-repeat;filter:blur(0.9px);opacity:1"></div>
<div class="a" style="left:1003px;top:472.5px;width:72px;height:10px;background:linear-gradient(90deg,#b0b0b3 0px 5px,#adadb0 5px 10px,#d4d4d7 10px 15px,#c4c4c7 15px 20px,#e0e0e3 20px 25px,#aeaeb1 25px 30px,#bebec1 30px 35px,#d0d0d3 35px 40px,#d0d0d3 40px 45px,#c0c0c3 45px 50px,#c1c1c4 50px 55px,#bdbdc0 55px 60px,#dfdfe2 60px 65px,#e1e1e4 65px 70px,#b2b2b5 70px 72px) top/100% 50% no-repeat,linear-gradient(90deg,#c1c1c4 0px 5px,#b2b2b5 5px 10px,#bfbfc2 10px 15px,#d4d4d7 15px 20px,#b5b5b8 20px 25px,#acacaf 25px 30px,#c9c9cc 30px 35px,#a9a9ac 35px 40px,#e2e2e5 40px 45px,#cacacd 45px 50px,#dadadd 50px 55px,#c1c1c4 55px 60px,#cdcdd0 60px 65px,#ceced1 65px 70px,#dddde0 70px 72px) bottom/100% 50% no-repeat;filter:blur(0.9px);opacity:1"></div>
<div class="a" style="left:1104px;top:469.0px;width:60px;height:8px;background:linear-gradient(90deg,#c4c4c7 0px 5px,#d7d7da 5px 10px,#cfcfd2 10px 15px,transparent 15px 20px,#c3c3c6 20px 25px,#b6b6b9 25px 30px,#d8d8db 30px 35px,#dddde0 35px 40px,#acacaf 40px 45px,#c7c7ca 45px 50px,#c8c8cb 50px 55px,#c1c1c4 55px 60px) top/100% 50% no-repeat,linear-gradient(90deg,#bfbfc2 0px 5px,#b2b2b5 5px 10px,#cacacd 10px 15px,#d2d2d5 15px 20px,#d9d9dc 20px 25px,#b4b4b7 25px 30px,#cdcdd0 30px 35px,#bcbcbf 35px 40px,#b4b4b7 40px 45px,transparent 45px 50px,#b4b4b7 50px 55px,#dbdbde 55px 60px) bottom/100% 50% no-repeat;filter:blur(0.9px);opacity:1"></div>
<div class="a" style="left:1104px;top:478.0px;width:24px;height:8px;background:linear-gradient(90deg,#dedee1 0px 5px,#cfcfd2 5px 10px,#c7c7ca 10px 15px,#b2b2b5 15px 20px,#d6d6d9 20px 24px) top/100% 50% no-repeat,linear-gradient(90deg,#c5c5c8 0px 5px,#cbcbce 5px 10px,#b5b5b8 10px 15px,#bababd 15px 20px,#c0c0c3 20px 24px) bottom/100% 50% no-repeat;filter:blur(0.9px);opacity:1"></div>
<div class="a" style="left:1177px;top:472.5px;width:47px;height:10px;background:linear-gradient(90deg,#c5c5c8 0px 5px,#cfcfd2 5px 10px,#c9c9cc 10px 15px,#d2d2d5 15px 20px,#aeaeb1 20px 25px,#c7c7ca 25px 30px,#ceced1 30px 35px,#c9c9cc 35px 40px,#d1d1d4 40px 45px,#b0b0b3 45px 47px) top/100% 50% no-repeat,linear-gradient(90deg,#c1c1c4 0px 5px,#b5b5b8 5px 10px,#b8b8bb 10px 15px,#b6b6b9 15px 20px,#a8a8ab 20px 25px,#e1e1e4 25px 30px,#c2c2c5 30px 35px,#a8a8ab 35px 40px,transparent 40px 45px,#acacaf 45px 47px) bottom/100% 50% no-repeat;filter:blur(0.9px);opacity:1"></div>
<div class="a" style="left:411px;top:491px;width:835px;height:28px;background:#f5f6f8;border-bottom:1px solid #e6e7ea;box-sizing:border-box"></div>
<div class="a t" style="left:415px;top:497.3px;height:16px;line-height:16px;font-size:9.8px;color:#4a4a4a;letter-spacing:-0.15px">8</div>
<div class="a t" style="left:454px;top:497.3px;height:16px;line-height:16px;font-size:9.8px;color:#4a4a4a;letter-spacing:-0.15px">146730087</div>
<div class="a t" style="left:517px;top:497.3px;height:16px;line-height:16px;font-size:9.8px;color:#4a4a4a;letter-spacing:-0.15px">20200501</div>
<div class="a" style="left:587px;top:499.5px;width:29px;height:10px;background:linear-gradient(90deg,#c7c7ca 0px 5px,#b1b1b4 5px 10px,#e1e1e4 10px 15px,#aeaeb1 15px 20px,#d0d0d3 20px 25px,#a8a8ab 25px 29px) top/100% 50% no-repeat,linear-gradient(90deg,#bababd 0px 5px,#b9b9bc 5px 10px,#b9b9bc 10px 15px,#e2e2e5 15px 20px,#bababd 20px 25px,#b8b8bb 25px 29px) bottom/100% 50% no-repeat;filter:blur(0.9px);opacity:1"></div>
<div class="a" style="left:670px;top:499.5px;width:42px;height:10px;background:linear-gradient(90deg,#adadb0 0px 5px,#d9d9dc 5px 10px,transparent 10px 15px,#bbbbbe 15px 20px,#bbbbbe 20px 25px,#b7b7ba 25px 30px,#a5a5a8 30px 35px,#c9c9cc 35px 40px,#b1b1b4 40px 42px) top/100% 50% no-repeat,linear-gradient(90deg,#acacaf 0px 5px,#b6b6b9 5px 10px,#cccccf 10px 15px,#aeaeb1 15px 20px,#e4e4e7 20px 25px,#cacacd 25px 30px,#b6b6b9 30px 35px,#c1c1c4 35px 40px,#e3e3e6 40px 42px) bottom/100% 50% no-repeat;filter:blur(0.9px);opacity:1"></div>
<div class="a" style="left:748px;top:499.5px;width:10px;height:10px;background:linear-gradient(90deg,#bcbcbf 0px 5px,#a6a6a9 5px 10px) top/100% 50% no-repeat,linear-gradient(90deg,transparent 0px 5px,#d2d2d5 5px 10px) bottom/100% 50% no-repeat;filter:blur(0.9px);opacity:1"></div>
<div class="a" style="left:818px;top:499.5px;width:28px;height:10px;background:linear-gradient(90deg,#b1b1b4 0px 5px,#bcbcbf 5px 10px,#cfcfd2 10px 15px,#b2b2b5 15px 20px,transparent 20px 25px,#d9d9dc 25px 28px) top/100% 50% no-repeat,linear-gradient(90deg,#bdbdc0 0px 5px,#c1c1c4 5px 10px,#dadadd 10px 15px,#cccccf 15px 20px,#bfbfc2 20px 25px,#d9d9dc 25px 28px) bottom/100% 50% no-repeat;filter:blur(0.9px);opacity:1"></div>
<div class="a" style="left:921px;top:499.5px;width:45px;height:10px;background:linear-gradient(90deg,#d7d7da 0px 5px,#bbbbbe 5px 10px,#adadb0 10px 15px,#d0d0d3 15px 20px,#bdbdc0 20px 25px,#d8d8db 25px 30px,transparent 30px 35px,#cccccf 35px 40px,#bdbdc0 40px 45px) top/100% 50% no-repeat,linear-gradient(90deg,#bdbdc0 0px 5px,#b5b5b8 5px 10px,#e0e0e3 10px 15px,#bfbfc2 15px 20px,#d0d0d3 20px 25px,#d6d6d9 25px 30px,#b3b3b6 30px 35px,transparent 35px 40px,#dbdbde 40px 45px) bottom/100% 50% no-repeat;filter:blur(0.9px);opacity:1"></div>
<div class="a" style="left:1003px;top:499.5px;width:79px;height:10px;background:linear-gradient(90deg,#a6a6a9 0px 5px,#d3d3d6 5px 10px,#c3c3c6 10px 15px,#c9c9cc 15px 20px,#bdbdc0 20px 25px,#d0d0d3 25px 30px,#bfbfc2 30px 35px,#dbdbde 35px 40px,#dcdcdf 40px 45px,#c0c0c3 45px 50px,#dddde0 50px 55px,#c5c5c8 55px 60px,#c7c7ca 60px 65px,#b3b3b6 65px 70px,#e1e1e4 70px 75px,#e0e0e3 75px 79px) top/100% 50% no-repeat,linear-gradient(90deg,#c0c0c3 0px 5px,#d4d4d7 5px 10px,#dbdbde 10px 15px,#cbcbce 15px 20px,#c5c5c8 20px 25px,transparent 25px 30px,#a9a9ac 30px 35px,#a7a7aa 35px 40px,#acacaf 40px 45px,#e3e3e6 45px 50px,#bababd 50px 55px,#bebec1 55px 60px,#dfdfe2 60px 65px,#a8a8ab 65px 70px,#c8c8cb 70px 75px,#a9a9ac 75px 79px) bottom/100% 50% no-repeat;filter:blur(0.9px);opacity:1"></div>
<div class="a" style="left:1104px;top:496.0px;width:60px;height:8px;background:linear-gradient(90deg,#c4c4c7 0px 5px,#a9a9ac 5px 10px,#cbcbce 10px 15px,#a5a5a8 15px 20px,#dfdfe2 20px 25px,transparent 25px 30px,#e4e4e7 30px 35px,#dbdbde 35px 40px,#b4b4b7 40px 45px,#d8d8db 45px 50px,#e1e1e4 50px 55px,#a9a9ac 55px 60px) top/100% 50% no-repeat,linear-gradient(90deg,#dedee1 0px 5px,#b7b7ba 5px 10px,#c1c1c4 10px 15px,#dedee1 15px 20px,#d5d5d8 20px 25px,transparent 25px 30px,#c5c5c8 30px 35px,#a9a9ac 35px 40px,#c2c2c5 40px 45px,#c0c0c3 45px 50px,#cfcfd2 50px 55px,#d8d8db 55px 60px) bottom/100% 50% no-repeat;filter:blur(0.9px);opacity:1"></div>
<div class="a" style="left:1104px;top:505.0px;width:24px;height:8px;background:linear-gradient(90deg,#d9d9dc 0px 5px,#d8d8db 5px 10px,#d7d7da 10px 15px,#cbcbce 15px 20px,#cccccf 20px 24px) top/100% 50% no-repeat,linear-gradient(90deg,#d3d3d6 0px 5px,#b7b7ba 5px 10px,#a6a6a9 10px 15px,#b7b7ba 15px 20px,#b7b7ba 20px 24px) bottom/100% 50% no-repeat;filter:blur(0.9px);opacity:1"></div>
<div class="a" style="left:1177px;top:499.5px;width:47px;height:10px;background:linear-gradient(90deg,#b4b4b7 0px 5px,#e3e3e6 5px 10px,#bfbfc2 10px 15px,#d0d0d3 15px 20px,#bcbcbf 20px 25px,#dfdfe2 25px 30px,#c1c1c4 30px 35px,#b6b6b9 35px 40px,#d6d6d9 40px 45px,#d1d1d4 45px 47px) top/100% 50% no-repeat,linear-gradient(90deg,#b1b1b4 0px 5px,#b0b0b3 5px 10px,#d8d8db 10px 15px,transparent 15px 20px,#b5b5b8 20px 25px,#e4e4e7 25px 30px,#cacacd 30px 35px,#cccccf 35px 40px,#d9d9dc 40px 45px,#c9c9cc 45px 47px) bottom/100% 50% no-repeat;filter:blur(0.9px);opacity:1"></div>
<div class="a" style="left:411px;top:518px;width:835px;height:28px;background:#ffffff;border-bottom:1px solid #e6e7ea;box-sizing:border-box"></div>
<div class="a t" style="left:415px;top:524.3px;height:16px;line-height:16px;font-size:9.8px;color:#4a4a4a;letter-spacing:-0.15px">9</div>
<div class="a t" style="left:454px;top:524.3px;height:16px;line-height:16px;font-size:9.8px;color:#4a4a4a;letter-spacing:-0.15px">146730088</div>
<div class="a t" style="left:517px;top:524.3px;height:16px;line-height:16px;font-size:9.8px;color:#4a4a4a;letter-spacing:-0.15px">20200501</div>
<div class="a" style="left:587px;top:526.5px;width:29px;height:10px;background:linear-gradient(90deg,#d1d1d4 0px 5px,#b2b2b5 5px 10px,#cccccf 10px 15px,#cfcfd2 15px 20px,#d1d1d4 20px 25px,#b7b7ba 25px 29px) top/100% 50% no-repeat,linear-gradient(90deg,#d7d7da 0px 5px,#bababd 5px 10px,#d6d6d9 10px 15px,#e4e4e7 15px 20px,#c2c2c5 20px 25px,#bcbcbf 25px 29px) bottom/100% 50% no-repeat;filter:blur(0.9px);opacity:1"></div>
<div class="a" style="left:670px;top:526.5px;width:46px;height:10px;background:linear-gradient(90deg,#c5c5c8 0px 5px,#ceced1 5px 10px,#b3b3b6 10px 15px,#bcbcbf 15px 20px,#d7d7da 20px 25px,#e3e3e6 25px 30px,#d5d5d8 30px 35px,#b4b4b7 35px 40px,#d2d2d5 40px 45px,#c6c6c9 45px 46px) top/100% 50% no-repeat,linear-gradient(90deg,#b3b3b6 0px 5px,#d7d7da 5px 10px,#a6a6a9 10px 15px,#bfbfc2 15px 20px,#bcbcbf 20px 25px,#dbdbde 25px 30px,#bababd 30px 35px,#aeaeb1 35px 40px,#aeaeb1 40px 45px,#cccccf 45px 46px) bottom/100% 50% no-repeat;filter:blur(0.9px);opacity:1"></div>
<div class="a" style="left:748px;top:526.5px;width:14px;height:10px;background:linear-gradient(90deg,#c3c3c6 0px 5px,#d3d3d6 5px 10px,#afafb2 10px 14px) top/100% 50% no-repeat,linear-gradient(90deg,#b3b3b6 0px 5px,#e3e3e6 5px 10px,#dcdcdf 10px 14px) bottom/100% 50% no-repeat;filter:blur(0.9px);opacity:1"></div>
<div class="a" style="left:818px;top:526.5px;width:46px;height:10px;background:linear-gradient(90deg,#d0d0d3 0px 5px,#aaaaad 5px 10px,#c0c0c3 10px 15px,#b4b4b7 15px 20px,#bcbcbf 20px 25px,#c0c0c3 25px 30px,#c7c7ca 30px 35px,#b4b4b7 35px 40px,#e1e1e4 40px 45px,#bababd 45px 46px) top/100% 50% no-repeat,linear-gradient(90deg,#b7b7ba 0px 5px,#ababae 5px 10px,#dddde0 10px 15px,#ceced1 15px 20px,#d1d1d4 20px 25px,#a6a6a9 25px 30px,#d6d6d9 30px 35px,#b2b2b5 35px 40px,#c6c6c9 40px 45px,#c8c8cb 45px 46px) bottom/100% 50% no-repeat;filter:blur(0.9px);opacity:1"></div>
<div class="a" style="left:921px;top:526.5px;width:40px;height:10px;background:linear-gradient(90deg,#c0c0c3 0px 5px,#a9a9ac 5px 10px,#a9a9ac 10px 15px,#d1d1d4 15px 20px,#b0b0b3 20px 25px,#cdcdd0 25px 30px,#dddde0 30px 35px,#e2e2e5 35px 40px) top/100% 50% no-repeat,linear-gradient(90deg,#a5a5a8 0px 5px,transparent 5px 10px,#cbcbce 10px 15px,#bbbbbe 15px 20px,#c4c4c7 20px 25px,#a8a8ab 25px 30px,#d5d5d8 30px 35px,#a9a9ac 35px 40px) bottom/100% 50% no-repeat;filter:blur(0.9px);opacity:1"></div>
<div class="a" style="left:1003px;top:526.5px;width:80px;height:10px;background:linear-gradient(90deg,#b0b0b3 0px 5px,#dedee1 5px 10px,#d5d5d8 10px 15px,#d2d2d5 15px 20px,#e0e0e3 20px 25px,#b1b1b4 25px 30px,#bcbcbf 30px 35px,#b2b2b5 35px 40px,#adadb0 40px 45px,#e2e2e5 45px 50px,#c5c5c8 50px 55px,#e0e0e3 55px 60px,#e4e4e7 60px 65px,#c6c6c9 65px 70px,#d5d5d8 70px 75px,#cfcfd2 75px 80px) top/100% 50% no-repeat,linear-gradient(90deg,transparent 0px 5px,#e1e1e4 5px 10px,#d9d9dc 10px 15px,#dadadd 15px 20px,#ceced1 20px 25px,#a6a6a9 25px 30px,#cbcbce 30px 35px,#dbdbde 35px 40px,#e1e1e4 40px 45px,#dcdcdf 45px 50px,#d0d0d3 50px 55px,#aaaaad 55px 60px,#e2e2e5 60px 65px,transparent 65px 70px,#d5d5d8 70px 75px,#dedee1 75px 80px) bottom/100% 50% no-repeat;filter:blur(0.9px);opacity:1"></div>
<div class="a" style="left:1104px;top:523.0px;width:60px;height:8px;background:linear-gradient(90deg,#c8c8cb 0px 5px,#bdbdc0 5px 10px,#c5c5c8 10px 15px,#c8c8cb 15px 20px,#ababae 20px 25px,#b9b9bc 25px 30px,#d8d8db 30px 35px,#e0e0e3 35px 40px,#aaaaad 40px 45px,#e1e1e4 45px 50px,#bbbbbe 50px 55px,#bbbbbe 55px 60px) top/100% 50% no-repeat,linear-gradient(90deg,#a5a5a8 0px 5px,#dfdfe2 5px 10px,#cacacd 10px 15px,#ceced1 15px 20px,#c5c5c8 20px 25px,#dfdfe2 25px 30px,#dcdcdf 30px 35px,#cdcdd0 35px 40px,#c0c0c3 40px 45px,#d2d2d5 45px 50px,#b1b1b4 50px 55px,#d0d0d3 55px 60px) bottom/100% 50% no-repeat;filter:blur(0.9px);opacity:1"></div>
<div class="a" style="left:1104px;top:532.0px;width:24px;height:8px;background:linear-gradient(90deg,#d6d6d9 0px 5px,#bcbcbf 5px 10px,#d0d0d3 10px 15px,#cdcdd0 15px 20px,#d6d6d9 20px 24px) top/100% 50% no-repeat,linear-gradient(90deg,#d6d6d9 0px 5px,#dadadd 5px 10px,#acacaf 10px 15px,#b5b5b8 15px 20px,#bfbfc2 20px 24px) bottom/100% 50% no-repeat;filter:blur(0.9px);opacity:1"></div>
<div class="a" style="left:1177px;top:526.5px;width:47px;height:10px;background:linear-gradient(90deg,#afafb2 0px 5px,#d4d4d7 5px 10px,#b4b4b7 10px 15px,#ceced1 15px 20px,#aaaaad 20px 25px,#bfbfc2 25px 30px,#b2b2b5 30px 35px,#dfdfe2 35px 40px,#a5a5a8 40px 45px,#d6d6d9 45px 47px) top/100% 50% no-repeat,linear-gradient(90deg,#b9b9bc 0px 5px,#c8c8cb 5px 10px,#afafb2 10px 15px,#c1c1c4 15px 20px,#bebec1 20px 25px,#a7a7aa 25px 30px,#dddde0 30px 35px,#bfbfc2 35px 40px,#c3c3c6 40px 45px,#d7d7da 45px 47px) bottom/100% 50% no-repeat;filter:blur(0.9px);opacity:1"></div>
<div class="a" style="left:411px;top:545px;width:835px;height:28px;background:#f5f6f8;border-bottom:1px solid #e6e7ea;box-sizing:border-box"></div>
<div class="a t" style="left:415px;top:551.3px;height:16px;line-height:16px;font-size:9.8px;color:#4a4a4a;letter-spacing:-0.15px">10</div>
<div class="a t" style="left:454px;top:551.3px;height:16px;line-height:16px;font-size:9.8px;color:#4a4a4a;letter-spacing:-0.15px">146730089</div>
<div class="a t" style="left:517px;top:551.3px;height:16px;line-height:16px;font-size:9.8px;color:#4a4a4a;letter-spacing:-0.15px">20200501</div>
<div class="a" style="left:587px;top:553.5px;width:19px;height:10px;background:linear-gradient(90deg,#bcbcbf 0px 5px,#d3d3d6 5px 10px,#a7a7aa 10px 15px,#a8a8ab 15px 19px) top/100% 50% no-repeat,linear-gradient(90deg,#d0d0d3 0px 5px,#b7b7ba 5px 10px,#a5a5a8 10px 15px,#b5b5b8 15px 19px) bottom/100% 50% no-repeat;filter:blur(0.9px);opacity:1"></div>
<div class="a" style="left:670px;top:553.5px;width:32px;height:10px;background:linear-gradient(90deg,#d5d5d8 0px 5px,#adadb0 5px 10px,#acacaf 10px 15px,#d3d3d6 15px 20px,#dfdfe2 20px 25px,#dedee1 25px 30px,#a5a5a8 30px 32px) top/100% 50% no-repeat,linear-gradient(90deg,#e1e1e4 0px 5px,#a5a5a8 5px 10px,#b7b7ba 10px 15px,#d3d3d6 15px 20px,#c0c0c3 20px 25px,#c8c8cb 25px 30px,#afafb2 30px 32px) bottom/100% 50% no-repeat;filter:blur(0.9px);opacity:1"></div>
<div class="a" style="left:748px;top:553.5px;width:14px;height:10px;background:linear-gradient(90deg,#c5c5c8 0px 5px,#c0c0c3 5px 10px,#b4b4b7 10px 14px) top/100% 50% no-repeat,linear-gradient(90deg,#bebec1 0px 5px,#c7c7ca 5px 10px,#cdcdd0 10px 14px) bottom/100% 50% no-repeat;filter:blur(0.9px);opacity:1"></div>
<div class="a" style="left:818px;top:553.5px;width:28px;height:10px;background:linear-gradient(90deg,#b5b5b8 0px 5px,#d9d9dc 5px 10px,#b1b1b4 10px 15px,#c1c1c4 15px 20px,#b8b8bb 20px 25px,#acacaf 25px 28px) top/100% 50% no-repeat,linear-gradient(90deg,#b9b9bc 0px 5px,transparent 5px 10px,#bebec1 10px 15px,#bfbfc2 15px 20px,#d2d2d5 20px 25px,#bcbcbf 25px 28px) bottom/100% 50% no-repeat;filter:blur(0.9px);opacity:1"></div>
<div class="a" style="left:921px;top:553.5px;width:40px;height:10px;background:linear-gradient(90deg,#b7b7ba 0px 5px,#ababae 5px 10px,#c9c9cc 10px 15px,#a9a9ac 15px 20px,#acacaf 20px 25px,#e2e2e5 25px 30px,transparent 30px 35px,#bcbcbf 35px 40px) top/100% 50% no-repeat,linear-gradient(90deg,#dadadd 0px 5px,#d2d2d5 5px 10px,#d3d3d6 10px 15px,#d6d6d9 15px 20px,#d0d0d3 20px 25px,#adadb0 25px 30px,#d3d3d6 30px 35px,#d0d0d3 35px 40px) bottom/100% 50% no-repeat;filter:blur(0.9px);opacity:1"></div>
<div class="a" style="left:1003px;top:550.0px;width:46px;height:8px;background:linear-gradient(90deg,#d7d7da 0px 5px,transparent 5px 10px,#b7b7ba 10px 15px,#d6d6d9 15px 20px,#b4b4b7 20px 25px,#c8c8cb 25px 30px,#c4c4c7 30px 35px,transparent 35px 40px,#cacacd 40px 45px,#cbcbce 45px 46px) top/100% 50% no-repeat,linear-gradient(90deg,#a9a9ac 0px 5px,#dfdfe2 5px 10px,#a8a8ab 10px 15px,#e1e1e4 15px 20px,#dbdbde 20px 25px,#dedee1 25px 30px,#d1d1d4 30px 35px,#a5a5a8 35px 40px,#ababae 40px 45px,#c5c5c8 45px 46px) bottom/100% 50% no-repeat;filter:blur(0.9px);opacity:1"></div>
<div class="a" style="left:1003px;top:559.0px;width:74px;height:8px;background:linear-gradient(90deg,#bbbbbe 0px 5px,#b7b7ba 5px 10px,#bababd 10px 15px,#c6c6c9 15px 20px,#b4b4b7 20px 25px,#a7a7aa 25px 30px,#aeaeb1 30px 35px,#b5b5b8 35px 40px,#bababd 40px 45px,#e4e4e7 45px 50px,#a6a6a9 50px 55px,#b2b2b5 55px 60px,#c9c9cc 60px 65px,#d4d4d7 65px 70px,#d0d0d3 70px 74px) top/100% 50% no-repeat,linear-gradient(90deg,#d4d4d7 0px 5px,#c9c9cc 5px 10px,#c5c5c8 10px 15px,#d3d3d6 15px 20px,#ceced1 20px 25px,#c5c5c8 25px 30px,#d1d1d4 30px 35px,#d0d0d3 35px 40px,#d0d0d3 40px 45px,#ceced1 45px 50px,#bebec1 50px 55px,transparent 55px 60px,#b2b2b5 60px 65px,#b0b0b3 65px 70px,#d6d6d9 70px 74px) bottom/100% 50% no-repeat;filter:blur(0.9px);opacity:1"></div>
<div class="a" style="left:1104px;top:550.0px;width:64px;height:8px;background:linear-gradient(90deg,transparent 0px 5px,#dcdcdf 5px 10px,#bbbbbe 10px 15px,#bcbcbf 15px 20px,#dbdbde 20px 25px,transparent 25px 30px,#bcbcbf 30px 35px,#dbdbde 35px 40px,#d2d2d5 40px 45px,#c9c9cc 45px 50px,#b2b2b5 50px 55px,#c6c6c9 55px 60px,#dfdfe2 60px 64px) top/100% 50% no-repeat,linear-gradient(90deg,#dddde0 0px 5px,#d7d7da 5px 10px,#b1b1b4 10px 15px,#b4b4b7 15px 20px,#cccccf 20px 25px,#d3d3d6 25px 30px,#aeaeb1 30px 35px,#e4e4e7 35px 40px,#cfcfd2 40px 45px,#e2e2e5 45px 50px,#dedee1 50px 55px,#d2d2d5 55px 60px,#dcdcdf 60px 64px) bottom/100% 50% no-repeat;filter:blur(0.9px);opacity:1"></div>
<div class="a" style="left:1104px;top:559.0px;width:10px;height:8px;background:linear-gradient(90deg,#a5a5a8 0px 5px,#a5a5a8 5px 10px) top/100% 50% no-repeat,linear-gradient(90deg,#d0d0d3 0px 5px,#b4b4b7 5px 10px) bottom/100% 50% no-repeat;filter:blur(0.9px);opacity:1"></div>
<div class="a" style="left:1177px;top:550.0px;width:66px;height:8px;background:linear-gradient(90deg,#cfcfd2 0px 5px,#c4c4c7 5px 10px,#dadadd 10px 15px,#bbbbbe 15px 20px,#d6d6d9 20px 25px,#acacaf 25px 30px,#bababd 30px 35px,#b1b1b4 35px 40px,#dcdcdf 40px 45px,transparent 45px 50px,#dcdcdf 50px 55px,#ababae 55px 60px,#b6b6b9 60px 65px,#c2c2c5 65px 66px) top/100% 50% no-repeat,linear-gradient(90deg,#bfbfc2 0px 5px,#d3d3d6 5px 10px,#c0c0c3 10px 15px,#a8a8ab 15px 20px,#cacacd 20px 25px,#b0b0b3 25px 30px,#b4b4b7 30px 35px,#c6c6c9 35px 40px,#a6a6a9 40px 45px,#c9c9cc 45px 50px,#ababae 50px 55px,#acacaf 55px 60px,transparent 60px 65px,#bcbcbf 65px 66px) bottom/100% 50% no-repeat;filter:blur(0.9px);opacity:1"></div>
<div class="a" style="left:1177px;top:559.0px;width:40px;height:8px;background:linear-gradient(90deg,#c6c6c9 0px 5px,#d8d8db 5px 10px,#d5d5d8 10px 15px,#c8c8cb 15px 20px,#bababd 20px 25px,#c0c0c3 25px 30px,transparent 30px 35px,#c6c6c9 35px 40px) top/100% 50% no-repeat,linear-gradient(90deg,#cdcdd0 0px 5px,#bababd 5px 10px,#c3c3c6 10px 15px,#d3d3d6 15px 20px,#a7a7aa 20px 25px,#d8d8db 25px 30px,#dedee1 30px 35px,#bebec1 35px 40px) bottom/100% 50% no-repeat;filter:blur(0.9px);opacity:1"></div>
<div class="a" style="left:411px;top:572px;width:835px;height:28px;background:#ffffff;border-bottom:1px solid #e6e7ea;box-sizing:border-box"></div>
<div class="a t" style="left:415px;top:578.3px;height:16px;line-height:16px;font-size:9.8px;color:#4a4a4a;letter-spacing:-0.15px">11</div>
<div class="a t" style="left:454px;top:578.3px;height:16px;line-height:16px;font-size:9.8px;color:#4a4a4a;letter-spacing:-0.15px">146730090</div>
<div class="a t" style="left:517px;top:578.3px;height:16px;line-height:16px;font-size:9.8px;color:#4a4a4a;letter-spacing:-0.15px">20200501</div>
<div class="a" style="left:587px;top:580.5px;width:29px;height:10px;background:linear-gradient(90deg,#b0b0b3 0px 5px,#a7a7aa 5px 10px,#b4b4b7 10px 15px,#b1b1b4 15px 20px,#c1c1c4 20px 25px,#dddde0 25px 29px) top/100% 50% no-repeat,linear-gradient(90deg,#bebec1 0px 5px,#ababae 5px 10px,#dedee1 10px 15px,#bfbfc2 15px 20px,#adadb0 20px 25px,transparent 25px 29px) bottom/100% 50% no-repeat;filter:blur(0.9px);opacity:1"></div>
<div class="a" style="left:670px;top:580.5px;width:42px;height:10px;background:linear-gradient(90deg,#e4e4e7 0px 5px,#b0b0b3 5px 10px,#adadb0 10px 15px,#d4d4d7 15px 20px,#d5d5d8 20px 25px,#b9b9bc 25px 30px,#e4e4e7 30px 35px,#a8a8ab 35px 40px,#bababd 40px 42px) top/100% 50% no-repeat,linear-gradient(90deg,#c9c9cc 0px 5px,transparent 5px 10px,#d0d0d3 10px 15px,#aeaeb1 15px 20px,#bdbdc0 20px 25px,#aeaeb1 25px 30px,#e4e4e7 30px 35px,#b6b6b9 35px 40px,#d7d7da 40px 42px) bottom/100% 50% no-repeat;filter:blur(0.9px);opacity:1"></div>
<div class="a" style="left:748px;top:580.5px;width:10px;height:10px;background:linear-gradient(90deg,#dfdfe2 0px 5px,#d3d3d6 5px 10px) top/100% 50% no-repeat,linear-gradient(90deg,#c6c6c9 0px 5px,#aeaeb1 5px 10px) bottom/100% 50% no-repeat;filter:blur(0.9px);opacity:1"></div>
<div class="a" style="left:818px;top:580.5px;width:23px;height:10px;background:linear-gradient(90deg,#acacaf 0px 5px,#b1b1b4 5px 10px,#dfdfe2 10px 15px,#dfdfe2 15px 20px,#dadadd 20px 23px) top/100% 50% no-repeat,linear-gradient(90deg,#b8b8bb 0px 5px,#acacaf 5px 10px,transparent 10px 15px,#dddde0 15px 20px,#a7a7aa 20px 23px) bottom/100% 50% no-repeat;filter:blur(0.9px);opacity:1"></div>
<div class="a" style="left:921px;top:580.5px;width:40px;height:10px;background:linear-gradient(90deg,transparent 0px 5px,#c1c1c4 5px 10px,#d4d4d7 10px 15px,#b4b4b7 15px 20px,#e2e2e5 20px 25px,#bbbbbe 25px 30px,#cdcdd0 30px 35px,#e4e4e7 35px 40px) top/100% 50% no-repeat,linear-gradient(90deg,#a9a9ac 0px 5px,#b9b9bc 5px 10px,#d2d2d5 10px 15px,#afafb2 15px 20px,#b7b7ba 20px 25px,#d5d5d8 25px 30px,#bcbcbf 30px 35px,#c4c4c7 35px 40px) bottom/100% 50% no-repeat;filter:blur(0.9px);opacity:1"></div>
<div class="a" style="left:1003px;top:580.5px;width:42px;height:10px;background:linear-gradient(90deg,#cacacd 0px 5px,#b1b1b4 5px 10px,#bfbfc2 10px 15px,#aaaaad 15px 20px,#b5b5b8 20px 25px,#c8c8cb 25px 30px,#d4d4d7 30px 35px,#a5a5a8 35px 40px,#b8b8bb 40px 42px) top/100% 50% no-repeat,linear-gradient(90deg,#dadadd 0px 5px,#d0d0d3 5px 10px,#dcdcdf 10px 15px,#d6d6d9 15px 20px,#d9d9dc 20px 25px,#aaaaad 25px 30px,#b4b4b7 30px 35px,#c6c6c9 35px 40px,#acacaf 40px 42px) bottom/100% 50% no-repeat;filter:blur(0.9px);opacity:1"></div>
<div class="a" style="left:1104px;top:577.0px;width:66px;height:8px;background:linear-gradient(90deg,#dcdcdf 0px 5px,#c3c3c6 5px 10px,#aeaeb1 10px 15px,#afafb2 15px 20px,#b8b8bb 20px 25px,#a7a7aa 25px 30px,#b7b7ba 30px 35px,#aeaeb1 35px 40px,#bebec1 40px 45px,#afafb2 45px 50px,#cbcbce 50px 55px,#c4c4c7 55px 60px,#d8d8db 60px 65px,#bfbfc2 65px 66px) top/100% 50% no-repeat,linear-gradient(90deg,#b9b9bc 0px 5px,#aaaaad 5px 10px,#d1d1d4 10px 15px,#afafb2 15px 20px,#d2d2d5 20px 25px,#adadb0 25px 30px,#bfbfc2 30px 35px,#e4e4e7 35px 40px,#c1c1c4 40px 45px,#bfbfc2 45px 50px,#c2c2c5 50px 55px,#d7d7da 55px 60px,#dcdcdf 60px 65px,#b4b4b7 65px 66px) bottom/100% 50% no-repeat;filter:blur(0.9px);opacity:1"></div>
<div class="a" style="left:1104px;top:586.0px;width:66px;height:8px;background:linear-gradient(90deg,#cdcdd0 0px 5px,#cacacd 5px 10px,#aeaeb1 10px 15px,#b6b6b9 15px 20px,#bababd 20px 25px,#c7c7ca 25px 30px,#e3e3e6 30px 35px,#d0d0d3 35px 40px,#b3b3b6 40px 45px,#dbdbde 45px 50px,#c7c7ca 50px 55px,#a8a8ab 55px 60px,#a7a7aa 60px 65px,#bfbfc2 65px 66px) top/100% 50% no-repeat,linear-gradient(90deg,#b0b0b3 0px 5px,#d8d8db 5px 10px,transparent 10px 15px,#d5d5d8 15px 20px,transparent 20px 25px,#bbbbbe 25px 30px,#c0c0c3 30px 35px,#d3d3d6 35px 40px,#cdcdd0 40px 45px,#dedee1 45px 50px,#b1b1b4 50px 55px,#c9c9cc 55px 60px,transparent 60px 65px,#a6a6a9 65px 66px) bottom/100% 50% no-repeat;filter:blur(0.9px);opacity:1"></div>
<div class="a" style="left:1177px;top:580.5px;width:38px;height:10px;background:linear-gradient(90deg,#cfcfd2 0px 5px,#c5c5c8 5px 10px,#acacaf 10px 15px,#e0e0e3 15px 20px,#b7b7ba 20px 25px,#cdcdd0 25px 30px,#ceced1 30px 35px,#acacaf 35px 38px) top/100% 50% no-repeat,linear-gradient(90deg,#d1d1d4 0px 5px,#d5d5d8 5px 10px,#bebec1 10px 15px,#b3b3b6 15px 20px,#adadb0 20px 25px,#b3b3b6 25px 30px,#d2d2d5 30px 35px,#a5a5a8 35px 38px) bottom/100% 50% no-repeat;filter:blur(0.9px);opacity:1"></div>
<div class="a" style="left:411px;top:599px;width:835px;height:28px;background:#f5f6f8;border-bottom:1px solid #e6e7ea;box-sizing:border-box"></div>
<div class="a t" style="left:415px;top:605.3px;height:16px;line-height:16px;font-size:9.8px;color:#4a4a4a;letter-spacing:-0.15px">12</div>
<div class="a t" style="left:454px;top:605.3px;height:16px;line-height:16px;font-size:9.8px;color:#4a4a4a;letter-spacing:-0.15px">146730091</div>
<div class="a t" style="left:517px;top:605.3px;height:16px;line-height:16px;font-size:9.8px;color:#4a4a4a;letter-spacing:-0.15px">20200501</div>
<div class="a" style="left:587px;top:607.5px;width:19px;height:10px;background:linear-gradient(90deg,#dfdfe2 0px 5px,#bababd 5px 10px,#b0b0b3 10px 15px,#e4e4e7 15px 19px) top/100% 50% no-repeat,linear-gradient(90deg,#e0e0e3 0px 5px,#c1c1c4 5px 10px,#e0e0e3 10px 15px,#c3c3c6 15px 19px) bottom/100% 50% no-repeat;filter:blur(0.9px);opacity:1"></div>
<div class="a" style="left:670px;top:607.5px;width:32px;height:10px;background:linear-gradient(90deg,#c5c5c8 0px 5px,#c6c6c9 5px 10px,transparent 10px 15px,#d1d1d4 15px 20px,#c3c3c6 20px 25px,#d9d9dc 25px 30px,#dddde0 30px 32px) top/100% 50% no-repeat,linear-gradient(90deg,#bdbdc0 0px 5px,#d7d7da 5px 10px,#b7b7ba 10px 15px,#dedee1 15px 20px,#acacaf 20px 25px,#c5c5c8 25px 30px,#c3c3c6 30px 32px) bottom/100% 50% no-repeat;filter:blur(0.9px);opacity:1"></div>
<div class="a" style="left:748px;top:607.5px;width:18px;height:10px;background:linear-gradient(90deg,#e4e4e7 0px 5px,transparent 5px 10px,#bababd 10px 15px,#d5d5d8 15px 18px) top/100% 50% no-repeat,linear-gradient(90deg,#bdbdc0 0px 5px,#dddde0 5px 10px,#b8b8bb 10px 15px,#dfdfe2 15px 18px) bottom/100% 50% no-repeat;filter:blur(0.9px);opacity:1"></div>
<div class="a" style="left:818px;top:607.5px;width:20px;height:10px;background:linear-gradient(90deg,#b4b4b7 0px 5px,#acacaf 5px 10px,#e3e3e6 10px 15px,#aaaaad 15px 20px) top/100% 50% no-repeat,linear-gradient(90deg,#c5c5c8 0px 5px,#c0c0c3 5px 10px,#d1d1d4 10px 15px,#aaaaad 15px 20px) bottom/100% 50% no-repeat;filter:blur(0.9px);opacity:1"></div>
<div class="a" style="left:921px;top:607.5px;width:45px;height:10px;background:linear-gradient(90deg,#dfdfe2 0px 5px,#a6a6a9 5px 10px,#d0d0d3 10px 15px,#bcbcbf 15px 20px,#e4e4e7 20px 25px,#cacacd 25px 30px,#bbbbbe 30px 35px,#a9a9ac 35px 40px,#adadb0 40px 45px) top/100% 50% no-repeat,linear-gradient(90deg,#b6b6b9 0px 5px,#cccccf 5px 10px,#dddde0 10px 15px,#bababd 15px 20px,transparent 20px 25px,#d7d7da 25px 30px,#d1d1d4 30px 35px,transparent 35px 40px,#d8d8db 40px 45px) bottom/100% 50% no-repeat;filter:blur(0.9px);opacity:1"></div>
<div class="a" style="left:1003px;top:604.0px;width:92px;height:8px;background:linear-gradient(90deg,#cdcdd0 0px 5px,#c2c2c5 5px 10px,#c2c2c5 10px 15px,#bfbfc2 15px 20px,#adadb0 20px 25px,#d3d3d6 25px 30px,#c6c6c9 30px 35px,#a8a8ab 35px 40px,#d2d2d5 40px 45px,#c1c1c4 45px 50px,transparent 50px 55px,#a7a7aa 55px 60px,#cdcdd0 60px 65px,#bbbbbe 65px 70px,#bebec1 70px 75px,#c2c2c5 75px 80px,#dbdbde 80px 85px,#c0c0c3 85px 90px,#d8d8db 90px 92px) top/100% 50% no-repeat,linear-gradient(90deg,#b1b1b4 0px 5px,#d4d4d7 5px 10px,#b4b4b7 10px 15px,transparent 15px 20px,#aaaaad 20px 25px,#c8c8cb 25px 30px,#b9b9bc 30px 35px,#c3c3c6 35px 40px,#c2c2c5 40px 45px,#d0d0d3 45px 50px,#c5c5c8 50px 55px,#dcdcdf 55px 60px,#b6b6b9 60px 65px,#b0b0b3 65px 70px,#d3d3d6 70px 75px,#cccccf 75px 80px,#b3b3b6 80px 85px,#d4d4d7 85px 90px,#b3b3b6 90px 92px) bottom/100% 50% no-repeat;filter:blur(0.9px);opacity:1"></div>
<div class="a" style="left:1003px;top:613.0px;width:40px;height:8px;background:linear-gradient(90deg,#b3b3b6 0px 5px,#bdbdc0 5px 10px,#a9a9ac 10px 15px,#d6d6d9 15px 20px,transparent 20px 25px,#ceced1 25px 30px,#d4d4d7 30px 35px,transparent 35px 40px) top/100% 50% no-repeat,linear-gradient(90deg,#aaaaad 0px 5px,#d2d2d5 5px 10px,#bdbdc0 10px 15px,#d6d6d9 15px 20px,#b0b0b3 20px 25px,#d1d1d4 25px 30px,#cfcfd2 30px 35px,#dedee1 35px 40px) bottom/100% 50% no-repeat;filter:blur(0.9px);opacity:1"></div>
<div class="a" style="left:1104px;top:604.0px;width:64px;height:8px;background:linear-gradient(90deg,#e4e4e7 0px 5px,#c5c5c8 5px 10px,#dadadd 10px 15px,#dedee1 15px 20px,#e2e2e5 20px 25px,#a7a7aa 25px 30px,#d3d3d6 30px 35px,#a9a9ac 35px 40px,#c8c8cb 40px 45px,#dadadd 45px 50px,#cacacd 50px 55px,transparent 55px 60px,#b0b0b3 60px 64px) top/100% 50% no-repeat,linear-gradient(90deg,#cdcdd0 0px 5px,#b2b2b5 5px 10px,#adadb0 10px 15px,#a6a6a9 15px 20px,#cdcdd0 20px 25px,#dfdfe2 25px 30px,#d7d7da 30px 35px,#cccccf 35px 40px,#c2c2c5 40px 45px,#dadadd 45px 50px,#c5c5c8 50px 55px,#a7a7aa 55px 60px,#dadadd 60px 64px) bottom/100% 50% no-repeat;filter:blur(0.9px);opacity:1"></div>
<div class="a" style="left:1104px;top:613.0px;width:64px;height:8px;background:linear-gradient(90deg,#dbdbde 0px 5px,#bcbcbf 5px 10px,#cacacd 10px 15px,#cdcdd0 15px 20px,#e2e2e5 20px 25px,#a6a6a9 25px 30px,#c9c9cc 30px 35px,#a6a6a9 35px 40px,#adadb0 40px 45px,#c1c1c4 45px 50px,#c2c2c5 50px 55px,#b8b8bb 55px 60px,#afafb2 60px 64px) top/100% 50% no-repeat,linear-gradient(90deg,#c4c4c7 0px 5px,#d0d0d3 5px 10px,#ababae 10px 15px,#dbdbde 15px 20px,#bbbbbe 20px 25px,#dadadd 25px 30px,#dedee1 30px 35px,#d5d5d8 35px 40px,#ceced1 40px 45px,#bbbbbe 45px 50px,#d7d7da 50px 55px,#d9d9dc 55px 60px,#d7d7da 60px 64px) bottom/100% 50% no-repeat;filter:blur(0.9px);opacity:1"></div>
<div class="a" style="left:1177px;top:604.0px;width:66px;height:8px;background:linear-gradient(90deg,#aeaeb1 0px 5px,transparent 5px 10px,#b4b4b7 10px 15px,#bbbbbe 15px 20px,#bababd 20px 25px,#b2b2b5 25px 30px,#a7a7aa 30px 35px,#c7c7ca 35px 40px,#b6b6b9 40px 45px,#c5c5c8 45px 50px,#dcdcdf 50px 55px,#dfdfe2 55px 60px,#dbdbde 60px 65px,#b8b8bb 65px 66px) top/100% 50% no-repeat,linear-gradient(90deg,#d3d3d6 0px 5px,#d0d0d3 5px 10px,#b4b4b7 10px 15px,#e2e2e5 15px 20px,#d4d4d7 20px 25px,#c0c0c3 25px 30px,#b2b2b5 30px 35px,transparent 35px 40px,#dbdbde 40px 45px,#d3d3d6 45px 50px,#c1c1c4 50px 55px,#afafb2 55px 60px,#c4c4c7 60px 65px,#cccccf 65px 66px) bottom/100% 50% no-repeat;filter:blur(0.9px);opacity:1"></div>
<div class="a" style="left:1177px;top:613.0px;width:22px;height:8px;background:linear-gradient(90deg,#ababae 0px 5px,#d5d5d8 5px 10px,#aeaeb1 10px 15px,#cbcbce 15px 20px,#c3c3c6 20px 22px) top/100% 50% no-repeat,linear-gradient(90deg,transparent 0px 5px,#bbbbbe 5px 10px,#d1d1d4 10px 15px,#c9c9cc 15px 20px,#a8a8ab 20px 22px) bottom/100% 50% no-repeat;filter:blur(0.9px);opacity:1"></div>
<div class="a" style="left:411px;top:626px;width:835px;height:28px;background:#ffffff;border-bottom:1px solid #e6e7ea;box-sizing:border-box"></div>
<div class="a t" style="left:415px;top:632.3px;height:16px;line-height:16px;font-size:9.8px;color:#4a4a4a;letter-spacing:-0.15px">13</div>
<div class="a t" style="left:454px;top:632.3px;height:16px;line-height:16px;font-size:9.8px;color:#4a4a4a;letter-spacing:-0.15px">146730092</div>
<div class="a t" style="left:517px;top:632.3px;height:16px;line-height:16px;font-size:9.8px;color:#4a4a4a;letter-spacing:-0.15px">20200501</div>
<div class="a" style="left:587px;top:634.5px;width:29px;height:10px;background:linear-gradient(90deg,#c1c1c4 0px 5px,#a8a8ab 5px 10px,#c2c2c5 10px 15px,#b6b6b9 15px 20px,#c1c1c4 20px 25px,#a7a7aa 25px 29px) top/100% 50% no-repeat,linear-gradient(90deg,#d7d7da 0px 5px,#cbcbce 5px 10px,#b2b2b5 10px 15px,#bababd 15px 20px,#a8a8ab 20px 25px,#b3b3b6 25px 29px) bottom/100% 50% no-repeat;filter:blur(0.9px);opacity:1"></div>
<div class="a" style="left:670px;top:634.5px;width:46px;height:10px;background:linear-gradient(90deg,#d0d0d3 0px 5px,#d3d3d6 5px 10px,#c4c4c7 10px 15px,#b0b0b3 15px 20px,#d1d1d4 20px 25px,transparent 25px 30px,#adadb0 30px 35px,#a8a8ab 35px 40px,#ceced1 40px 45px,#d4d4d7 45px 46px) top/100% 50% no-repeat,linear-gradient(90deg,#b5b5b8 0px 5px,#e1e1e4 5px 10px,#b9b9bc 10px 15px,#cacacd 15px 20px,#aaaaad 20px 25px,transparent 25px 30px,#e4e4e7 30px 35px,#adadb0 35px 40px,#bebec1 40px 45px,#d1d1d4 45px 46px) bottom/100% 50% no-repeat;filter:blur(0.9px);opacity:1"></div>
<div class="a" style="left:818px;top:634.5px;width:23px;height:10px;background:linear-gradient(90deg,#e2e2e5 0px 5px,#b5b5b8 5px 10px,#d4d4d7 10px 15px,#cccccf 15px 20px,#dedee1 20px 23px) top/100% 50% no-repeat,linear-gradient(90deg,#aeaeb1 0px 5px,#d8d8db 5px 10px,#c6c6c9 10px 15px,#cacacd 15px 20px,#a6a6a9 20px 23px) bottom/100% 50% no-repeat;filter:blur(0.9px);opacity:1"></div>
<div class="a" style="left:921px;top:634.5px;width:40px;height:10px;background:linear-gradient(90deg,#e0e0e3 0px 5px,#dadadd 5px 10px,#b8b8bb 10px 15px,#d0d0d3 15px 20px,#b4b4b7 20px 25px,#b4b4b7 25px 30px,#c1c1c4 30px 35px,#c9c9cc 35px 40px) top/100% 50% no-repeat,linear-gradient(90deg,#acacaf 0px 5px,#c4c4c7 5px 10px,#d9d9dc 10px 15px,#d1d1d4 15px 20px,#e1e1e4 20px 25px,#cccccf 25px 30px,#cccccf 30px 35px,#dadadd 35px 40px) bottom/100% 50% no-repeat;filter:blur(0.9px);opacity:1"></div>
<div class="a" style="left:1003px;top:634.5px;width:46px;height:10px;background:linear-gradient(90deg,#bfbfc2 0px 5px,#ababae 5px 10px,#cdcdd0 10px 15px,#d4d4d7 15px 20px,#c0c0c3 20px 25px,#a8a8ab 25px 30px,#aeaeb1 30px 35px,#cacacd 35px 40px,#e3e3e6 40px 45px,#b9b9bc 45px 46px) top/100% 50% no-repeat,linear-gradient(90deg,#cfcfd2 0px 5px,#dedee1 5px 10px,#dedee1 10px 15px,#aaaaad 15px 20px,#c9c9cc 20px 25px,#c3c3c6 25px 30px,#adadb0 30px 35px,#d1d1d4 35px 40px,#bfbfc2 40px 45px,#a8a8ab 45px 46px) bottom/100% 50% no-repeat;filter:blur(0.9px);opacity:1"></div>
<div class="a" style="left:1104px;top:631.0px;width:64px;height:8px;background:linear-gradient(90deg,#e3e3e6 0px 5px,#bdbdc0 5px 10px,#c9c9cc 10px 15px,#b2b2b5 15px 20px,#cccccf 20px 25px,#d6d6d9 25px 30px,#d0d0d3 30px 35px,#dcdcdf 35px 40px,#e3e3e6 40px 45px,#d0d0d3 45px 50px,#c2c2c5 50px 55px,#cccccf 55px 60px,#b7b7ba 60px 64px) top/100% 50% no-repeat,linear-gradient(90deg,#dbdbde 0px 5px,#aaaaad 5px 10px,#d7d7da 10px 15px,#b6b6b9 15px 20px,#b0b0b3 20px 25px,#e3e3e6 25px 30px,#b0b0b3 30px 35px,#c3c3c6 35px 40px,#ababae 40px 45px,#c4c4c7 45px 50px,#aaaaad 50px 55px,#b0b0b3 55px 60px,#d0d0d3 60px 64px) bottom/100% 50% no-repeat;filter:blur(0.9px);opacity:1"></div>
<div class="a" style="left:1104px;top:640.0px;width:40px;height:8px;background:linear-gradient(90deg,#b6b6b9 0px 5px,#d3d3d6 5px 10px,#bcbcbf 10px 15px,#c9c9cc 15px 20px,#dbdbde 20px 25px,#d6d6d9 25px 30px,#b9b9bc 30px 35px,transparent 35px 40px) top/100% 50% no-repeat,linear-gradient(90deg,#d7d7da 0px 5px,#d5d5d8 5px 10px,#aaaaad 10px 15px,#d2d2d5 15px 20px,#d2d2d5 20px 25px,#c0c0c3 25px 30px,#d9d9dc 30px 35px,#c8c8cb 35px 40px) bottom/100% 50% no-repeat;filter:blur(0.9px);opacity:1"></div>
<div class="a" style="left:1177px;top:634.5px;width:66px;height:10px;background:linear-gradient(90deg,#dbdbde 0px 5px,#e1e1e4 5px 10px,#d8d8db 10px 15px,#bfbfc2 15px 20px,#dddde0 20px 25px,#c0c0c3 25px 30px,#cccccf 30px 35px,#a5a5a8 35px 40px,#d3d3d6 40px 45px,#b0b0b3 45px 50px,#acacaf 50px 55px,#b6b6b9 55px 60px,transparent 60px 65px,#afafb2 65px 66px) top/100% 50% no-repeat,linear-gradient(90deg,#bababd 0px 5px,#c1c1c4 5px 10px,#b8b8bb 10px 15px,#b5b5b8 15px 20px,#dbdbde 20px 25px,#bcbcbf 25px 30px,#d4d4d7 30px 35px,#bbbbbe 35px 40px,#e3e3e6 40px 45px,#a5a5a8 45px 50px,#e4e4e7 50px 55px,#b2b2b5 55px 60px,#ababae 60px 65px,#c3c3c6 65px 66px) bottom/100% 50% no-repeat;filter:blur(0.9px);opacity:1"></div>
<div class="a t" style="left:748px;top:631.5px;height:16px;line-height:16px;font-size:9px;color:#555">MC</div>
<div class="a" style="left:450px;top:264px;width:1px;height:381px;background:#e3e4e7"></div>
<div class="a" style="left:514px;top:264px;width:1px;height:381px;background:#e3e4e7"></div>
<div class="a" style="left:585px;top:264px;width:1px;height:381px;background:#e3e4e7"></div>
<div class="a" style="left:667px;top:264px;width:1px;height:381px;background:#e3e4e7"></div>
<div class="a" style="left:744px;top:264px;width:1px;height:381px;background:#e3e4e7"></div>
<div class="a" style="left:816px;top:264px;width:1px;height:381px;background:#e3e4e7"></div>
<div class="a" style="left:918px;top:264px;width:1px;height:381px;background:#e3e4e7"></div>
<div class="a" style="left:999px;top:264px;width:1px;height:381px;background:#e3e4e7"></div>
<div class="a" style="left:1102px;top:264px;width:1px;height:381px;background:#e3e4e7"></div>
<div class="a" style="left:1174px;top:264px;width:1px;height:381px;background:#e3e4e7"></div>
<div class="a" style="left:1239px;top:564px;width:4px;height:21px;background:#8ccdf0;border-radius:1px"></div>
<div class="a" style="left:411px;top:644px;width:835px;height:10px;background:#f1f1f1"></div>
<div class="a" style="left:423px;top:644.5px;width:505px;height:8.5px;background:#c1c1c1"></div>
<svg class="a" style="left:414.00px;top:645.50px" width="5.00" height="6.00" viewBox="0 0 5 6"><polygon points="4,1 4,5 1,3" fill="#999"/></svg>
<div class="a" style="left:411px;top:654px;width:835px;height:29px;background:#fff;border-bottom:1px solid #e3e4e7;box-sizing:border-box"></div>
<div class="a" style="left:589px;top:660px;width:30px;height:16px;background:#fff;border:1px solid #8c8c8c;border-radius:2px;box-sizing:border-box"></div>
<div class="a t" style="left:589.0px;top:660.0px;width:30px;height:16px;line-height:16px;text-align:center;font-size:9.5px;color:#333"><b>首</b><b>页</b></div>
<div class="a" style="left:622px;top:660px;width:39px;height:16px;background:#fff;border:1px solid #8c8c8c;border-radius:2px;box-sizing:border-box"></div>
<div class="a t" style="left:622.0px;top:660.0px;width:39px;height:16px;line-height:16px;text-align:center;font-size:9.5px;color:#333"><b>上</b><b>一</b><b>页</b></div>
<div class="a" style="left:667px;top:660px;width:16px;height:16px;background:#bababa;border-radius:2px"></div>
<div class="a t" style="left:667.0px;top:660.0px;width:16px;height:16px;line-height:16px;text-align:center;font-size:9.5px;color:#fff">1</div>
<div class="a" style="left:689px;top:660px;width:16px;height:16px;background:#fff;border:1px solid #8c8c8c;border-radius:2px;box-sizing:border-box"></div>
<div class="a t" style="left:689.0px;top:660.0px;width:16px;height:16px;line-height:16px;text-align:center;font-size:9.5px;color:#333">2</div>
<div class="a" style="left:711px;top:660px;width:17px;height:16px;background:#fff;border:1px solid #8c8c8c;border-radius:2px;box-sizing:border-box"></div>
<div class="a t" style="left:711.0px;top:660.0px;width:17px;height:16px;line-height:16px;text-align:center;font-size:9.5px;color:#333">3</div>
<div class="a" style="left:734px;top:660px;width:17px;height:16px;background:#fff;border:1px solid #8c8c8c;border-radius:2px;box-sizing:border-box"></div>
<div class="a t" style="left:734.0px;top:660.0px;width:17px;height:16px;line-height:16px;text-align:center;font-size:9.5px;color:#333">4</div>
<div class="a" style="left:756px;top:660px;width:17px;height:16px;background:#fff;border:1px solid #8c8c8c;border-radius:2px;box-sizing:border-box"></div>
<div class="a t" style="left:756.0px;top:660.0px;width:17px;height:16px;line-height:16px;text-align:center;font-size:9.5px;color:#333">5</div>
<div class="a" style="left:779px;top:660px;width:40px;height:16px;background:#fff;border:1px solid #8c8c8c;border-radius:2px;box-sizing:border-box"></div>
<div class="a t" style="left:779.0px;top:660.0px;width:40px;height:16px;line-height:16px;text-align:center;font-size:9.5px;color:#333"><b>下</b><b>一</b><b>页</b></div>
<div class="a" style="left:822px;top:660px;width:30px;height:16px;background:#fff;border:1px solid #8c8c8c;border-radius:2px;box-sizing:border-box"></div>
<div class="a t" style="left:822.0px;top:660.0px;width:30px;height:16px;line-height:16px;text-align:center;font-size:9.5px;color:#333"><b>末</b><b>页</b></div>
<div class="a t" style="left:863px;top:660.0px;height:16px;line-height:16px;font-size:9.5px;color:#333"><b>共</b> 226704 <b>页</b></div>
<div class="a t" style="left:930.5px;top:660.0px;height:16px;line-height:16px;font-size:9.5px;color:#333"><b>每</b><b>页</b><b>显</b><b>示</b><b>个</b><b>数</b>:</div>
<div class="a" style="left:995px;top:659px;width:27px;height:17px;background:#fff;border:1px solid #c9c9c9;box-sizing:border-box;border-radius:2px"></div>
<div class="a t" style="left:995.0px;top:659.5px;width:27px;height:16px;line-height:16px;text-align:center;font-size:9.5px;color:#333">16</div>
<div class="a t" style="left:1032px;top:660.0px;height:16px;line-height:16px;font-size:9.5px;color:#333"><b>共</b> 3627249 <b>条</b></div>
</body></html>
